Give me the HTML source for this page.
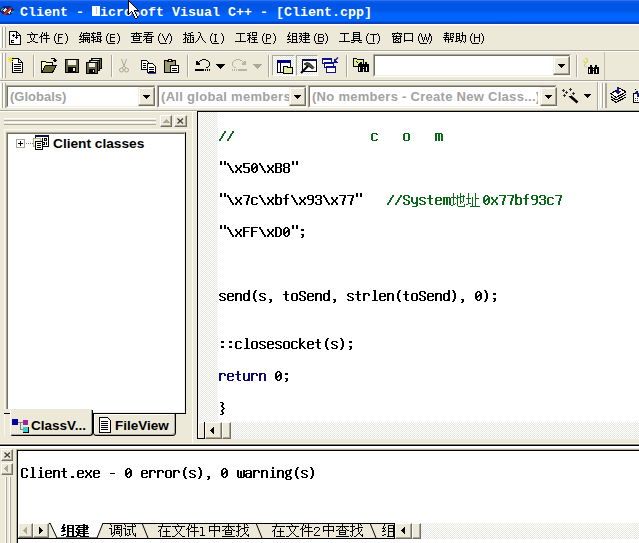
<!DOCTYPE html>
<html><head><meta charset="utf-8">
<style>
*{margin:0;padding:0;box-sizing:border-box}
html,body{width:639px;height:543px;overflow:hidden;background:#ECE9D8;font-family:"Liberation Sans",sans-serif}
.a{position:absolute}
svg{position:absolute;shape-rendering:crispEdges;overflow:visible}
#title{left:0;top:0;width:639px;height:24px;background:linear-gradient(#2A70F4 0,#2A70F4 1px,#0D5DEA 1px,#0055E4 4px,#0056E6 11px,#0062FA 13px,#0064FC 21px,#0848C8 22px,#0A3CB0 24px)}
#tline{left:0;top:24px;width:639px;height:3px;background:linear-gradient(#FFFFFF 0,#FFFFFF 1px,#F2F1EA 1px,#F2F1EA 2px,#E6E4D8 2px)}
.ttxt{left:20px;top:5px;font:bold 13.33px/16px "Liberation Mono",monospace;color:#fff;white-space:pre}
.grip{width:6px;background:linear-gradient(90deg,#fff 0,#fff 1px,#F4F3EA 1px,#F4F3EA 2px,#ACA899 2px,#ACA899 3px,#fff 3px,#fff 4px,#F4F3EA 4px,#F4F3EA 5px,#ACA899 5px,#ACA899 6px)}
.hsep{height:2px;border-top:1px solid #ACA899;border-bottom:1px solid #fff}
.vsep{width:2px;border-left:1px solid #ACA899;border-right:1px solid #fff}
.menu{font-size:12px;line-height:14px;color:#000;white-space:pre;top:30px}
.sunk{background:#fff;border-top:1px solid #ACA899;border-left:1px solid #ACA899;border-right:1px solid #fff;border-bottom:1px solid #fff}
.sunk2{position:absolute;left:0;top:0;right:0;bottom:0;border-top:1px solid #716F64;border-left:1px solid #716F64;border-right:1px solid #F1EFE2;border-bottom:1px solid #F1EFE2}
.cbtn{position:absolute;background:#ECE9D8;border-top:1px solid #F1EFE2;border-left:1px solid #F1EFE2;border-right:1px solid #716F64;border-bottom:1px solid #716F64;box-shadow:inset -1px -1px 0 #ACA899,inset 1px 1px 0 #fff}
.tri{position:absolute;width:0;height:0;border-left:3.5px solid transparent;border-right:3.5px solid transparent;border-top:4px solid #000}
.ctxt{position:absolute;font-weight:bold;font-size:13px;line-height:16px;color:#A2A2A2;white-space:pre;overflow:hidden}
.dither{background-color:#fff;background-image:conic-gradient(#E8E8E2 25%,transparent 25% 50%,#E8E8E2 50% 75%,transparent 75%);background-size:2px 2px}
.code{font:bold 13.33px/16px "Liberation Mono",monospace;white-space:pre;color:#000}
.g{color:#0A6A18}
.kw{color:#0A0A70}
.btn3d{border-top:1px solid #fff;border-left:1px solid #fff;border-right:1px solid #716F64;border-bottom:1px solid #716F64;box-shadow:inset -1px -1px 0 #ACA899;background:#ECE9D8}
</style></head><body>
<!-- ============ title bar ============ -->
<div id="title" class="a"></div>
<div id="tline" class="a"></div>
<svg style="left:0;top:5px" width="16" height="11" viewBox="0 0 16 11" shape-rendering="auto">
<ellipse cx="7" cy="5.5" rx="7" ry="4.8" fill="#14208A"/>
<path d="M2.5 6 L5 3 L7 4 L4.5 7 Z" fill="#F0F0B0"/>
<path d="M7 7 L9.5 5 L11.5 6 L9.5 9 Z" fill="#F0F0C0"/>
<path d="M3.5 9.5 L10.5 2 L12 3 L5 10.5 Z" fill="#C02818"/>
<path d="M0.5 5 L3 2.5 L4 3.5 L1.5 6.5 Z" fill="#30A060"/>
<path d="M11 8 L13 5.5 L14 6.5 L12 9 Z" fill="#30A060"/>
</svg>
<div class="a ttxt">Client - &nbsp;icrosoft Visual C++ - [Client.cpp]</div>
<div class="a" style="left:92px;top:6px;width:8px;height:10px;background:#fff"></div>
<div class="a" style="left:96px;top:7px;width:1px;height:7px;background:#A8C8F0"></div>
<svg style="left:128px;top:0" width="12" height="19"><rect x="0" y="0" width="1" height="1" fill="#000"/><rect x="0" y="1" width="1" height="1" fill="#000"/><rect x="1" y="1" width="1" height="1" fill="#000"/><rect x="0" y="2" width="1" height="1" fill="#000"/><rect x="1" y="2" width="1" height="1" fill="#fff"/><rect x="2" y="2" width="1" height="1" fill="#000"/><rect x="0" y="3" width="1" height="1" fill="#000"/><rect x="1" y="3" width="1" height="1" fill="#fff"/><rect x="2" y="3" width="1" height="1" fill="#fff"/><rect x="3" y="3" width="1" height="1" fill="#000"/><rect x="0" y="4" width="1" height="1" fill="#000"/><rect x="1" y="4" width="1" height="1" fill="#fff"/><rect x="2" y="4" width="1" height="1" fill="#fff"/><rect x="3" y="4" width="1" height="1" fill="#fff"/><rect x="4" y="4" width="1" height="1" fill="#000"/><rect x="0" y="5" width="1" height="1" fill="#000"/><rect x="1" y="5" width="1" height="1" fill="#fff"/><rect x="2" y="5" width="1" height="1" fill="#fff"/><rect x="3" y="5" width="1" height="1" fill="#fff"/><rect x="4" y="5" width="1" height="1" fill="#fff"/><rect x="5" y="5" width="1" height="1" fill="#000"/><rect x="0" y="6" width="1" height="1" fill="#000"/><rect x="1" y="6" width="1" height="1" fill="#fff"/><rect x="2" y="6" width="1" height="1" fill="#fff"/><rect x="3" y="6" width="1" height="1" fill="#fff"/><rect x="4" y="6" width="1" height="1" fill="#fff"/><rect x="5" y="6" width="1" height="1" fill="#fff"/><rect x="6" y="6" width="1" height="1" fill="#000"/><rect x="0" y="7" width="1" height="1" fill="#000"/><rect x="1" y="7" width="1" height="1" fill="#fff"/><rect x="2" y="7" width="1" height="1" fill="#fff"/><rect x="3" y="7" width="1" height="1" fill="#fff"/><rect x="4" y="7" width="1" height="1" fill="#fff"/><rect x="5" y="7" width="1" height="1" fill="#fff"/><rect x="6" y="7" width="1" height="1" fill="#fff"/><rect x="7" y="7" width="1" height="1" fill="#000"/><rect x="0" y="8" width="1" height="1" fill="#000"/><rect x="1" y="8" width="1" height="1" fill="#fff"/><rect x="2" y="8" width="1" height="1" fill="#fff"/><rect x="3" y="8" width="1" height="1" fill="#fff"/><rect x="4" y="8" width="1" height="1" fill="#fff"/><rect x="5" y="8" width="1" height="1" fill="#fff"/><rect x="6" y="8" width="1" height="1" fill="#fff"/><rect x="7" y="8" width="1" height="1" fill="#fff"/><rect x="8" y="8" width="1" height="1" fill="#000"/><rect x="0" y="9" width="1" height="1" fill="#000"/><rect x="1" y="9" width="1" height="1" fill="#fff"/><rect x="2" y="9" width="1" height="1" fill="#fff"/><rect x="3" y="9" width="1" height="1" fill="#fff"/><rect x="4" y="9" width="1" height="1" fill="#fff"/><rect x="5" y="9" width="1" height="1" fill="#fff"/><rect x="6" y="9" width="1" height="1" fill="#fff"/><rect x="7" y="9" width="1" height="1" fill="#fff"/><rect x="8" y="9" width="1" height="1" fill="#fff"/><rect x="9" y="9" width="1" height="1" fill="#000"/><rect x="0" y="10" width="1" height="1" fill="#000"/><rect x="1" y="10" width="1" height="1" fill="#fff"/><rect x="2" y="10" width="1" height="1" fill="#fff"/><rect x="3" y="10" width="1" height="1" fill="#fff"/><rect x="4" y="10" width="1" height="1" fill="#fff"/><rect x="5" y="10" width="1" height="1" fill="#fff"/><rect x="6" y="10" width="1" height="1" fill="#000"/><rect x="7" y="10" width="1" height="1" fill="#000"/><rect x="8" y="10" width="1" height="1" fill="#000"/><rect x="9" y="10" width="1" height="1" fill="#000"/><rect x="10" y="10" width="1" height="1" fill="#000"/><rect x="0" y="11" width="1" height="1" fill="#000"/><rect x="1" y="11" width="1" height="1" fill="#fff"/><rect x="2" y="11" width="1" height="1" fill="#fff"/><rect x="3" y="11" width="1" height="1" fill="#000"/><rect x="4" y="11" width="1" height="1" fill="#fff"/><rect x="5" y="11" width="1" height="1" fill="#fff"/><rect x="6" y="11" width="1" height="1" fill="#000"/><rect x="0" y="12" width="1" height="1" fill="#000"/><rect x="1" y="12" width="1" height="1" fill="#fff"/><rect x="2" y="12" width="1" height="1" fill="#000"/><rect x="4" y="12" width="1" height="1" fill="#000"/><rect x="5" y="12" width="1" height="1" fill="#fff"/><rect x="6" y="12" width="1" height="1" fill="#fff"/><rect x="7" y="12" width="1" height="1" fill="#000"/><rect x="0" y="13" width="1" height="1" fill="#000"/><rect x="1" y="13" width="1" height="1" fill="#000"/><rect x="4" y="13" width="1" height="1" fill="#000"/><rect x="5" y="13" width="1" height="1" fill="#fff"/><rect x="6" y="13" width="1" height="1" fill="#fff"/><rect x="7" y="13" width="1" height="1" fill="#000"/><rect x="0" y="14" width="1" height="1" fill="#000"/><rect x="5" y="14" width="1" height="1" fill="#000"/><rect x="6" y="14" width="1" height="1" fill="#fff"/><rect x="7" y="14" width="1" height="1" fill="#fff"/><rect x="8" y="14" width="1" height="1" fill="#000"/><rect x="5" y="15" width="1" height="1" fill="#000"/><rect x="6" y="15" width="1" height="1" fill="#fff"/><rect x="7" y="15" width="1" height="1" fill="#fff"/><rect x="8" y="15" width="1" height="1" fill="#000"/><rect x="6" y="16" width="1" height="1" fill="#000"/><rect x="7" y="16" width="1" height="1" fill="#fff"/><rect x="8" y="16" width="1" height="1" fill="#fff"/><rect x="9" y="16" width="1" height="1" fill="#000"/><rect x="6" y="17" width="1" height="1" fill="#000"/><rect x="7" y="17" width="1" height="1" fill="#fff"/><rect x="8" y="17" width="1" height="1" fill="#fff"/><rect x="9" y="17" width="1" height="1" fill="#000"/><rect x="7" y="18" width="1" height="1" fill="#000"/><rect x="8" y="18" width="1" height="1" fill="#000"/></svg>

<!-- ============ menubar y 25..50 ============ -->
<div class="a grip" style="left:0;top:27px;height:21px"></div>
<svg style="left:9px;top:31px" width="12" height="14" viewBox="0 0 12 14">
<path d="M0.5 0.5 H7.5 L11.5 4.5 V13.5 H0.5 Z" fill="#fff" stroke="#000"/>
<path d="M7.5 0.5 V4.5 H11.5" fill="none" stroke="#000"/>
<rect x="3" y="4" width="3" height="1" fill="#000"/><rect x="4" y="3" width="1" height="3" fill="#000"/>
<rect x="6" y="6" width="3" height="1" fill="#000"/><rect x="7" y="5" width="1" height="3" fill="#000"/>
<rect x="2" y="9" width="3" height="1" fill="#000"/><rect x="2" y="9" width="1" height="3" fill="#000"/><rect x="2" y="11" width="3" height="1" fill="#000"/>
</svg>
<svg style="left:27px;top:30px" width="44" height="16" fill="#000"><rect x="4" y="2" width="1" height="1"/><rect x="15" y="2" width="1" height="1"/><rect x="19" y="2" width="1" height="1"/><rect x="5" y="3" width="1" height="1"/><rect x="15" y="3" width="1" height="1"/><rect x="17" y="3" width="1" height="1"/><rect x="19" y="3" width="1" height="1"/><rect x="29" y="3" width="1" height="1"/><rect x="38" y="3" width="1" height="1"/><rect x="0" y="4" width="11" height="1"/><rect x="14" y="4" width="1" height="1"/><rect x="17" y="4" width="1" height="1"/><rect x="19" y="4" width="1" height="1"/><rect x="28" y="4" width="1" height="1"/><rect x="31" y="4" width="5" height="1"/><rect x="39" y="4" width="1" height="1"/><rect x="3" y="5" width="1" height="1"/><rect x="7" y="5" width="1" height="1"/><rect x="14" y="5" width="1" height="1"/><rect x="16" y="5" width="6" height="1"/><rect x="28" y="5" width="1" height="1"/><rect x="31" y="5" width="1" height="1"/><rect x="39" y="5" width="1" height="1"/><rect x="3" y="6" width="1" height="1"/><rect x="7" y="6" width="1" height="1"/><rect x="13" y="6" width="3" height="1"/><rect x="19" y="6" width="1" height="1"/><rect x="27" y="6" width="1" height="1"/><rect x="31" y="6" width="1" height="1"/><rect x="40" y="6" width="1" height="1"/><rect x="3" y="7" width="1" height="1"/><rect x="7" y="7" width="1" height="1"/><rect x="12" y="7" width="1" height="1"/><rect x="14" y="7" width="1" height="1"/><rect x="19" y="7" width="1" height="1"/><rect x="27" y="7" width="1" height="1"/><rect x="31" y="7" width="4" height="1"/><rect x="40" y="7" width="1" height="1"/><rect x="4" y="8" width="1" height="1"/><rect x="6" y="8" width="1" height="1"/><rect x="14" y="8" width="1" height="1"/><rect x="16" y="8" width="7" height="1"/><rect x="27" y="8" width="1" height="1"/><rect x="31" y="8" width="1" height="1"/><rect x="40" y="8" width="1" height="1"/><rect x="4" y="9" width="1" height="1"/><rect x="6" y="9" width="1" height="1"/><rect x="14" y="9" width="1" height="1"/><rect x="19" y="9" width="1" height="1"/><rect x="27" y="9" width="1" height="1"/><rect x="31" y="9" width="1" height="1"/><rect x="40" y="9" width="1" height="1"/><rect x="5" y="10" width="1" height="1"/><rect x="14" y="10" width="1" height="1"/><rect x="19" y="10" width="1" height="1"/><rect x="27" y="10" width="1" height="1"/><rect x="31" y="10" width="1" height="1"/><rect x="40" y="10" width="1" height="1"/><rect x="3" y="11" width="2" height="1"/><rect x="6" y="11" width="2" height="1"/><rect x="14" y="11" width="1" height="1"/><rect x="19" y="11" width="1" height="1"/><rect x="28" y="11" width="1" height="1"/><rect x="31" y="11" width="1" height="1"/><rect x="39" y="11" width="1" height="1"/><rect x="0" y="12" width="3" height="1"/><rect x="8" y="12" width="3" height="1"/><rect x="14" y="12" width="1" height="1"/><rect x="19" y="12" width="1" height="1"/><rect x="28" y="12" width="1" height="1"/><rect x="39" y="12" width="1" height="1"/><rect x="29" y="13" width="1" height="1"/><rect x="38" y="13" width="1" height="1"/><rect x="30" y="13" width="6" height="1"/></svg>
<svg style="left:79px;top:30px" width="44" height="16" fill="#000"><rect x="2" y="2" width="1" height="1"/><rect x="7" y="2" width="1" height="1"/><rect x="14" y="2" width="1" height="1"/><rect x="18" y="2" width="4" height="1"/><rect x="2" y="3" width="1" height="1"/><rect x="4" y="3" width="7" height="1"/><rect x="12" y="3" width="5" height="1"/><rect x="18" y="3" width="1" height="1"/><rect x="21" y="3" width="1" height="1"/><rect x="29" y="3" width="1" height="1"/><rect x="38" y="3" width="1" height="1"/><rect x="1" y="4" width="1" height="1"/><rect x="4" y="4" width="1" height="1"/><rect x="10" y="4" width="1" height="1"/><rect x="13" y="4" width="1" height="1"/><rect x="18" y="4" width="4" height="1"/><rect x="28" y="4" width="1" height="1"/><rect x="31" y="4" width="5" height="1"/><rect x="39" y="4" width="1" height="1"/><rect x="1" y="5" width="1" height="1"/><rect x="3" y="5" width="8" height="1"/><rect x="13" y="5" width="2" height="1"/><rect x="28" y="5" width="1" height="1"/><rect x="31" y="5" width="1" height="1"/><rect x="39" y="5" width="1" height="1"/><rect x="0" y="6" width="3" height="1"/><rect x="4" y="6" width="1" height="1"/><rect x="12" y="6" width="1" height="1"/><rect x="14" y="6" width="1" height="1"/><rect x="17" y="6" width="6" height="1"/><rect x="27" y="6" width="1" height="1"/><rect x="31" y="6" width="1" height="1"/><rect x="40" y="6" width="1" height="1"/><rect x="2" y="7" width="1" height="1"/><rect x="4" y="7" width="7" height="1"/><rect x="12" y="7" width="5" height="1"/><rect x="18" y="7" width="1" height="1"/><rect x="21" y="7" width="1" height="1"/><rect x="27" y="7" width="1" height="1"/><rect x="31" y="7" width="5" height="1"/><rect x="40" y="7" width="1" height="1"/><rect x="1" y="8" width="1" height="1"/><rect x="4" y="8" width="1" height="1"/><rect x="6" y="8" width="1" height="1"/><rect x="8" y="8" width="1" height="1"/><rect x="10" y="8" width="1" height="1"/><rect x="14" y="8" width="1" height="1"/><rect x="18" y="8" width="2" height="1"/><rect x="21" y="8" width="1" height="1"/><rect x="27" y="8" width="1" height="1"/><rect x="31" y="8" width="1" height="1"/><rect x="40" y="8" width="1" height="1"/><rect x="0" y="9" width="11" height="1"/><rect x="14" y="9" width="3" height="1"/><rect x="18" y="9" width="1" height="1"/><rect x="20" y="9" width="2" height="1"/><rect x="27" y="9" width="1" height="1"/><rect x="31" y="9" width="1" height="1"/><rect x="40" y="9" width="1" height="1"/><rect x="4" y="10" width="1" height="1"/><rect x="6" y="10" width="1" height="1"/><rect x="8" y="10" width="1" height="1"/><rect x="10" y="10" width="1" height="1"/><rect x="12" y="10" width="3" height="1"/><rect x="18" y="10" width="1" height="1"/><rect x="21" y="10" width="2" height="1"/><rect x="27" y="10" width="1" height="1"/><rect x="31" y="10" width="1" height="1"/><rect x="40" y="10" width="1" height="1"/><rect x="2" y="11" width="3" height="1"/><rect x="6" y="11" width="1" height="1"/><rect x="8" y="11" width="1" height="1"/><rect x="10" y="11" width="1" height="1"/><rect x="14" y="11" width="1" height="1"/><rect x="16" y="11" width="6" height="1"/><rect x="28" y="11" width="1" height="1"/><rect x="31" y="11" width="5" height="1"/><rect x="39" y="11" width="1" height="1"/><rect x="0" y="12" width="2" height="1"/><rect x="4" y="12" width="1" height="1"/><rect x="9" y="12" width="2" height="1"/><rect x="14" y="12" width="1" height="1"/><rect x="21" y="12" width="1" height="1"/><rect x="28" y="12" width="1" height="1"/><rect x="39" y="12" width="1" height="1"/><rect x="29" y="13" width="1" height="1"/><rect x="38" y="13" width="1" height="1"/><rect x="30" y="13" width="6" height="1"/></svg>
<svg style="left:131px;top:30px" width="44" height="16" fill="#000"><rect x="5" y="2" width="1" height="1"/><rect x="13" y="2" width="9" height="1"/><rect x="0" y="3" width="11" height="1"/><rect x="17" y="3" width="1" height="1"/><rect x="29" y="3" width="1" height="1"/><rect x="38" y="3" width="1" height="1"/><rect x="3" y="4" width="1" height="1"/><rect x="5" y="4" width="1" height="1"/><rect x="7" y="4" width="1" height="1"/><rect x="13" y="4" width="8" height="1"/><rect x="28" y="4" width="1" height="1"/><rect x="31" y="4" width="1" height="1"/><rect x="37" y="4" width="1" height="1"/><rect x="39" y="4" width="1" height="1"/><rect x="2" y="5" width="1" height="1"/><rect x="5" y="5" width="1" height="1"/><rect x="8" y="5" width="1" height="1"/><rect x="16" y="5" width="1" height="1"/><rect x="28" y="5" width="1" height="1"/><rect x="31" y="5" width="1" height="1"/><rect x="37" y="5" width="1" height="1"/><rect x="39" y="5" width="1" height="1"/><rect x="0" y="6" width="11" height="1"/><rect x="12" y="6" width="11" height="1"/><rect x="27" y="6" width="1" height="1"/><rect x="32" y="6" width="1" height="1"/><rect x="36" y="6" width="1" height="1"/><rect x="40" y="6" width="1" height="1"/><rect x="2" y="7" width="1" height="1"/><rect x="8" y="7" width="1" height="1"/><rect x="15" y="7" width="1" height="1"/><rect x="20" y="7" width="1" height="1"/><rect x="27" y="7" width="1" height="1"/><rect x="32" y="7" width="1" height="1"/><rect x="36" y="7" width="1" height="1"/><rect x="40" y="7" width="1" height="1"/><rect x="2" y="8" width="7" height="1"/><rect x="14" y="8" width="7" height="1"/><rect x="27" y="8" width="1" height="1"/><rect x="33" y="8" width="1" height="1"/><rect x="35" y="8" width="1" height="1"/><rect x="40" y="8" width="1" height="1"/><rect x="2" y="9" width="1" height="1"/><rect x="8" y="9" width="1" height="1"/><rect x="13" y="9" width="1" height="1"/><rect x="15" y="9" width="1" height="1"/><rect x="20" y="9" width="1" height="1"/><rect x="27" y="9" width="1" height="1"/><rect x="33" y="9" width="1" height="1"/><rect x="35" y="9" width="1" height="1"/><rect x="40" y="9" width="1" height="1"/><rect x="2" y="10" width="7" height="1"/><rect x="12" y="10" width="1" height="1"/><rect x="15" y="10" width="6" height="1"/><rect x="27" y="10" width="1" height="1"/><rect x="34" y="10" width="1" height="1"/><rect x="40" y="10" width="1" height="1"/><rect x="15" y="11" width="1" height="1"/><rect x="20" y="11" width="1" height="1"/><rect x="28" y="11" width="1" height="1"/><rect x="34" y="11" width="1" height="1"/><rect x="39" y="11" width="1" height="1"/><rect x="0" y="12" width="11" height="1"/><rect x="15" y="12" width="6" height="1"/><rect x="28" y="12" width="1" height="1"/><rect x="39" y="12" width="1" height="1"/><rect x="29" y="13" width="1" height="1"/><rect x="38" y="13" width="1" height="1"/><rect x="30" y="13" width="6" height="1"/></svg>
<svg style="left:183px;top:30px" width="44" height="16" fill="#000"><rect x="2" y="2" width="1" height="1"/><rect x="8" y="2" width="2" height="1"/><rect x="15" y="2" width="2" height="1"/><rect x="2" y="3" width="1" height="1"/><rect x="5" y="3" width="3" height="1"/><rect x="17" y="3" width="1" height="1"/><rect x="29" y="3" width="1" height="1"/><rect x="38" y="3" width="1" height="1"/><rect x="0" y="4" width="4" height="1"/><rect x="7" y="4" width="1" height="1"/><rect x="17" y="4" width="1" height="1"/><rect x="28" y="4" width="1" height="1"/><rect x="31" y="4" width="3" height="1"/><rect x="39" y="4" width="1" height="1"/><rect x="2" y="5" width="1" height="1"/><rect x="4" y="5" width="7" height="1"/><rect x="17" y="5" width="1" height="1"/><rect x="28" y="5" width="1" height="1"/><rect x="32" y="5" width="1" height="1"/><rect x="39" y="5" width="1" height="1"/><rect x="2" y="6" width="1" height="1"/><rect x="7" y="6" width="1" height="1"/><rect x="16" y="6" width="1" height="1"/><rect x="18" y="6" width="1" height="1"/><rect x="27" y="6" width="1" height="1"/><rect x="32" y="6" width="1" height="1"/><rect x="40" y="6" width="1" height="1"/><rect x="2" y="7" width="2" height="1"/><rect x="5" y="7" width="1" height="1"/><rect x="7" y="7" width="1" height="1"/><rect x="9" y="7" width="2" height="1"/><rect x="16" y="7" width="1" height="1"/><rect x="18" y="7" width="1" height="1"/><rect x="27" y="7" width="1" height="1"/><rect x="32" y="7" width="1" height="1"/><rect x="40" y="7" width="1" height="1"/><rect x="1" y="8" width="2" height="1"/><rect x="4" y="8" width="1" height="1"/><rect x="7" y="8" width="1" height="1"/><rect x="10" y="8" width="1" height="1"/><rect x="15" y="8" width="1" height="1"/><rect x="19" y="8" width="1" height="1"/><rect x="27" y="8" width="1" height="1"/><rect x="32" y="8" width="1" height="1"/><rect x="40" y="8" width="1" height="1"/><rect x="0" y="9" width="1" height="1"/><rect x="2" y="9" width="1" height="1"/><rect x="4" y="9" width="2" height="1"/><rect x="7" y="9" width="1" height="1"/><rect x="9" y="9" width="2" height="1"/><rect x="15" y="9" width="1" height="1"/><rect x="19" y="9" width="1" height="1"/><rect x="27" y="9" width="1" height="1"/><rect x="32" y="9" width="1" height="1"/><rect x="40" y="9" width="1" height="1"/><rect x="2" y="10" width="1" height="1"/><rect x="4" y="10" width="1" height="1"/><rect x="7" y="10" width="1" height="1"/><rect x="10" y="10" width="1" height="1"/><rect x="14" y="10" width="1" height="1"/><rect x="20" y="10" width="1" height="1"/><rect x="27" y="10" width="1" height="1"/><rect x="32" y="10" width="1" height="1"/><rect x="40" y="10" width="1" height="1"/><rect x="2" y="11" width="1" height="1"/><rect x="4" y="11" width="1" height="1"/><rect x="7" y="11" width="1" height="1"/><rect x="10" y="11" width="1" height="1"/><rect x="13" y="11" width="1" height="1"/><rect x="21" y="11" width="1" height="1"/><rect x="28" y="11" width="1" height="1"/><rect x="31" y="11" width="3" height="1"/><rect x="39" y="11" width="1" height="1"/><rect x="0" y="12" width="3" height="1"/><rect x="4" y="12" width="7" height="1"/><rect x="12" y="12" width="1" height="1"/><rect x="22" y="12" width="1" height="1"/><rect x="28" y="12" width="1" height="1"/><rect x="39" y="12" width="1" height="1"/><rect x="29" y="13" width="1" height="1"/><rect x="38" y="13" width="1" height="1"/><rect x="30" y="13" width="6" height="1"/></svg>
<svg style="left:235px;top:30px" width="44" height="16" fill="#000"><rect x="15" y="2" width="1" height="1"/><rect x="17" y="2" width="5" height="1"/><rect x="1" y="3" width="9" height="1"/><rect x="12" y="3" width="3" height="1"/><rect x="17" y="3" width="1" height="1"/><rect x="21" y="3" width="1" height="1"/><rect x="29" y="3" width="1" height="1"/><rect x="38" y="3" width="1" height="1"/><rect x="5" y="4" width="1" height="1"/><rect x="14" y="4" width="1" height="1"/><rect x="17" y="4" width="1" height="1"/><rect x="21" y="4" width="1" height="1"/><rect x="28" y="4" width="1" height="1"/><rect x="31" y="4" width="4" height="1"/><rect x="39" y="4" width="1" height="1"/><rect x="5" y="5" width="1" height="1"/><rect x="12" y="5" width="4" height="1"/><rect x="17" y="5" width="5" height="1"/><rect x="28" y="5" width="1" height="1"/><rect x="31" y="5" width="1" height="1"/><rect x="35" y="5" width="1" height="1"/><rect x="39" y="5" width="1" height="1"/><rect x="5" y="6" width="1" height="1"/><rect x="14" y="6" width="1" height="1"/><rect x="27" y="6" width="1" height="1"/><rect x="31" y="6" width="1" height="1"/><rect x="35" y="6" width="1" height="1"/><rect x="40" y="6" width="1" height="1"/><rect x="5" y="7" width="1" height="1"/><rect x="14" y="7" width="2" height="1"/><rect x="17" y="7" width="5" height="1"/><rect x="27" y="7" width="1" height="1"/><rect x="31" y="7" width="1" height="1"/><rect x="35" y="7" width="1" height="1"/><rect x="40" y="7" width="1" height="1"/><rect x="5" y="8" width="1" height="1"/><rect x="13" y="8" width="2" height="1"/><rect x="16" y="8" width="1" height="1"/><rect x="19" y="8" width="1" height="1"/><rect x="27" y="8" width="1" height="1"/><rect x="31" y="8" width="4" height="1"/><rect x="40" y="8" width="1" height="1"/><rect x="5" y="9" width="1" height="1"/><rect x="13" y="9" width="2" height="1"/><rect x="17" y="9" width="5" height="1"/><rect x="27" y="9" width="1" height="1"/><rect x="31" y="9" width="1" height="1"/><rect x="40" y="9" width="1" height="1"/><rect x="5" y="10" width="1" height="1"/><rect x="12" y="10" width="1" height="1"/><rect x="14" y="10" width="1" height="1"/><rect x="19" y="10" width="1" height="1"/><rect x="27" y="10" width="1" height="1"/><rect x="31" y="10" width="1" height="1"/><rect x="40" y="10" width="1" height="1"/><rect x="0" y="11" width="11" height="1"/><rect x="14" y="11" width="1" height="1"/><rect x="19" y="11" width="1" height="1"/><rect x="28" y="11" width="1" height="1"/><rect x="31" y="11" width="1" height="1"/><rect x="39" y="11" width="1" height="1"/><rect x="14" y="12" width="1" height="1"/><rect x="16" y="12" width="7" height="1"/><rect x="28" y="12" width="1" height="1"/><rect x="39" y="12" width="1" height="1"/><rect x="29" y="13" width="1" height="1"/><rect x="38" y="13" width="1" height="1"/><rect x="30" y="13" width="6" height="1"/></svg>
<svg style="left:287px;top:30px" width="44" height="16" fill="#000"><rect x="2" y="2" width="1" height="1"/><rect x="18" y="2" width="1" height="1"/><rect x="2" y="3" width="1" height="1"/><rect x="5" y="3" width="5" height="1"/><rect x="12" y="3" width="3" height="1"/><rect x="16" y="3" width="6" height="1"/><rect x="29" y="3" width="1" height="1"/><rect x="38" y="3" width="1" height="1"/><rect x="1" y="4" width="1" height="1"/><rect x="5" y="4" width="1" height="1"/><rect x="9" y="4" width="1" height="1"/><rect x="14" y="4" width="1" height="1"/><rect x="18" y="4" width="1" height="1"/><rect x="21" y="4" width="1" height="1"/><rect x="28" y="4" width="1" height="1"/><rect x="31" y="4" width="5" height="1"/><rect x="39" y="4" width="1" height="1"/><rect x="1" y="5" width="1" height="1"/><rect x="3" y="5" width="1" height="1"/><rect x="5" y="5" width="1" height="1"/><rect x="9" y="5" width="1" height="1"/><rect x="13" y="5" width="1" height="1"/><rect x="15" y="5" width="8" height="1"/><rect x="28" y="5" width="1" height="1"/><rect x="31" y="5" width="1" height="1"/><rect x="36" y="5" width="1" height="1"/><rect x="39" y="5" width="1" height="1"/><rect x="0" y="6" width="3" height="1"/><rect x="5" y="6" width="5" height="1"/><rect x="12" y="6" width="3" height="1"/><rect x="18" y="6" width="1" height="1"/><rect x="21" y="6" width="1" height="1"/><rect x="27" y="6" width="1" height="1"/><rect x="31" y="6" width="1" height="1"/><rect x="36" y="6" width="1" height="1"/><rect x="40" y="6" width="1" height="1"/><rect x="2" y="7" width="1" height="1"/><rect x="5" y="7" width="1" height="1"/><rect x="9" y="7" width="1" height="1"/><rect x="14" y="7" width="1" height="1"/><rect x="16" y="7" width="6" height="1"/><rect x="27" y="7" width="1" height="1"/><rect x="31" y="7" width="5" height="1"/><rect x="40" y="7" width="1" height="1"/><rect x="1" y="8" width="1" height="1"/><rect x="5" y="8" width="1" height="1"/><rect x="9" y="8" width="1" height="1"/><rect x="12" y="8" width="1" height="1"/><rect x="14" y="8" width="1" height="1"/><rect x="18" y="8" width="1" height="1"/><rect x="27" y="8" width="1" height="1"/><rect x="31" y="8" width="1" height="1"/><rect x="36" y="8" width="1" height="1"/><rect x="40" y="8" width="1" height="1"/><rect x="0" y="9" width="4" height="1"/><rect x="5" y="9" width="5" height="1"/><rect x="13" y="9" width="2" height="1"/><rect x="16" y="9" width="7" height="1"/><rect x="27" y="9" width="1" height="1"/><rect x="31" y="9" width="1" height="1"/><rect x="36" y="9" width="1" height="1"/><rect x="40" y="9" width="1" height="1"/><rect x="5" y="10" width="1" height="1"/><rect x="9" y="10" width="1" height="1"/><rect x="14" y="10" width="1" height="1"/><rect x="18" y="10" width="1" height="1"/><rect x="27" y="10" width="1" height="1"/><rect x="31" y="10" width="1" height="1"/><rect x="36" y="10" width="1" height="1"/><rect x="40" y="10" width="1" height="1"/><rect x="2" y="11" width="2" height="1"/><rect x="5" y="11" width="1" height="1"/><rect x="9" y="11" width="1" height="1"/><rect x="13" y="11" width="1" height="1"/><rect x="15" y="11" width="1" height="1"/><rect x="18" y="11" width="1" height="1"/><rect x="28" y="11" width="1" height="1"/><rect x="31" y="11" width="5" height="1"/><rect x="39" y="11" width="1" height="1"/><rect x="0" y="12" width="2" height="1"/><rect x="4" y="12" width="7" height="1"/><rect x="12" y="12" width="1" height="1"/><rect x="16" y="12" width="7" height="1"/><rect x="28" y="12" width="1" height="1"/><rect x="39" y="12" width="1" height="1"/><rect x="29" y="13" width="1" height="1"/><rect x="38" y="13" width="1" height="1"/><rect x="30" y="13" width="6" height="1"/></svg>
<svg style="left:339px;top:30px" width="44" height="16" fill="#000"><rect x="14" y="2" width="7" height="1"/><rect x="1" y="3" width="9" height="1"/><rect x="14" y="3" width="1" height="1"/><rect x="20" y="3" width="1" height="1"/><rect x="29" y="3" width="1" height="1"/><rect x="38" y="3" width="1" height="1"/><rect x="5" y="4" width="1" height="1"/><rect x="14" y="4" width="7" height="1"/><rect x="28" y="4" width="1" height="1"/><rect x="31" y="4" width="7" height="1"/><rect x="39" y="4" width="1" height="1"/><rect x="5" y="5" width="1" height="1"/><rect x="14" y="5" width="1" height="1"/><rect x="20" y="5" width="1" height="1"/><rect x="28" y="5" width="1" height="1"/><rect x="34" y="5" width="1" height="1"/><rect x="39" y="5" width="1" height="1"/><rect x="5" y="6" width="1" height="1"/><rect x="14" y="6" width="7" height="1"/><rect x="27" y="6" width="1" height="1"/><rect x="34" y="6" width="1" height="1"/><rect x="40" y="6" width="1" height="1"/><rect x="5" y="7" width="1" height="1"/><rect x="14" y="7" width="1" height="1"/><rect x="20" y="7" width="1" height="1"/><rect x="27" y="7" width="1" height="1"/><rect x="34" y="7" width="1" height="1"/><rect x="40" y="7" width="1" height="1"/><rect x="5" y="8" width="1" height="1"/><rect x="14" y="8" width="7" height="1"/><rect x="27" y="8" width="1" height="1"/><rect x="34" y="8" width="1" height="1"/><rect x="40" y="8" width="1" height="1"/><rect x="5" y="9" width="1" height="1"/><rect x="14" y="9" width="1" height="1"/><rect x="20" y="9" width="1" height="1"/><rect x="27" y="9" width="1" height="1"/><rect x="34" y="9" width="1" height="1"/><rect x="40" y="9" width="1" height="1"/><rect x="5" y="10" width="1" height="1"/><rect x="12" y="10" width="11" height="1"/><rect x="27" y="10" width="1" height="1"/><rect x="34" y="10" width="1" height="1"/><rect x="40" y="10" width="1" height="1"/><rect x="0" y="11" width="11" height="1"/><rect x="15" y="11" width="1" height="1"/><rect x="19" y="11" width="1" height="1"/><rect x="28" y="11" width="1" height="1"/><rect x="34" y="11" width="1" height="1"/><rect x="39" y="11" width="1" height="1"/><rect x="12" y="12" width="3" height="1"/><rect x="20" y="12" width="3" height="1"/><rect x="28" y="12" width="1" height="1"/><rect x="39" y="12" width="1" height="1"/><rect x="29" y="13" width="1" height="1"/><rect x="38" y="13" width="1" height="1"/><rect x="30" y="13" width="6" height="1"/></svg>
<svg style="left:391px;top:30px" width="44" height="16" fill="#000"><rect x="6" y="2" width="1" height="1"/><rect x="1" y="3" width="10" height="1"/><rect x="13" y="3" width="9" height="1"/><rect x="29" y="3" width="1" height="1"/><rect x="38" y="3" width="1" height="1"/><rect x="1" y="4" width="1" height="1"/><rect x="3" y="4" width="1" height="1"/><rect x="8" y="4" width="1" height="1"/><rect x="10" y="4" width="1" height="1"/><rect x="13" y="4" width="1" height="1"/><rect x="21" y="4" width="1" height="1"/><rect x="28" y="4" width="1" height="1"/><rect x="30" y="4" width="1" height="1"/><rect x="34" y="4" width="1" height="1"/><rect x="38" y="4" width="2" height="1"/><rect x="2" y="5" width="1" height="1"/><rect x="5" y="5" width="1" height="1"/><rect x="9" y="5" width="1" height="1"/><rect x="13" y="5" width="1" height="1"/><rect x="21" y="5" width="1" height="1"/><rect x="28" y="5" width="1" height="1"/><rect x="30" y="5" width="1" height="1"/><rect x="34" y="5" width="1" height="1"/><rect x="38" y="5" width="2" height="1"/><rect x="1" y="6" width="10" height="1"/><rect x="13" y="6" width="1" height="1"/><rect x="21" y="6" width="1" height="1"/><rect x="27" y="6" width="1" height="1"/><rect x="30" y="6" width="1" height="1"/><rect x="34" y="6" width="1" height="1"/><rect x="38" y="6" width="1" height="1"/><rect x="40" y="6" width="1" height="1"/><rect x="2" y="7" width="1" height="1"/><rect x="5" y="7" width="1" height="1"/><rect x="9" y="7" width="1" height="1"/><rect x="13" y="7" width="1" height="1"/><rect x="21" y="7" width="1" height="1"/><rect x="27" y="7" width="1" height="1"/><rect x="31" y="7" width="1" height="1"/><rect x="33" y="7" width="1" height="1"/><rect x="35" y="7" width="1" height="1"/><rect x="37" y="7" width="1" height="1"/><rect x="40" y="7" width="1" height="1"/><rect x="2" y="8" width="1" height="1"/><rect x="4" y="8" width="6" height="1"/><rect x="13" y="8" width="1" height="1"/><rect x="21" y="8" width="1" height="1"/><rect x="27" y="8" width="1" height="1"/><rect x="31" y="8" width="1" height="1"/><rect x="33" y="8" width="1" height="1"/><rect x="35" y="8" width="1" height="1"/><rect x="37" y="8" width="1" height="1"/><rect x="40" y="8" width="1" height="1"/><rect x="2" y="9" width="3" height="1"/><rect x="7" y="9" width="1" height="1"/><rect x="9" y="9" width="1" height="1"/><rect x="13" y="9" width="1" height="1"/><rect x="21" y="9" width="1" height="1"/><rect x="27" y="9" width="1" height="1"/><rect x="31" y="9" width="1" height="1"/><rect x="33" y="9" width="1" height="1"/><rect x="35" y="9" width="1" height="1"/><rect x="37" y="9" width="1" height="1"/><rect x="40" y="9" width="1" height="1"/><rect x="2" y="10" width="1" height="1"/><rect x="5" y="10" width="2" height="1"/><rect x="9" y="10" width="1" height="1"/><rect x="13" y="10" width="9" height="1"/><rect x="27" y="10" width="1" height="1"/><rect x="32" y="10" width="1" height="1"/><rect x="36" y="10" width="1" height="1"/><rect x="40" y="10" width="1" height="1"/><rect x="2" y="11" width="1" height="1"/><rect x="4" y="11" width="1" height="1"/><rect x="7" y="11" width="1" height="1"/><rect x="9" y="11" width="1" height="1"/><rect x="13" y="11" width="1" height="1"/><rect x="21" y="11" width="1" height="1"/><rect x="28" y="11" width="1" height="1"/><rect x="32" y="11" width="1" height="1"/><rect x="36" y="11" width="1" height="1"/><rect x="39" y="11" width="1" height="1"/><rect x="2" y="12" width="8" height="1"/><rect x="28" y="12" width="1" height="1"/><rect x="39" y="12" width="1" height="1"/><rect x="29" y="13" width="1" height="1"/><rect x="38" y="13" width="1" height="1"/><rect x="30" y="13" width="6" height="1"/></svg>
<svg style="left:443px;top:30px" width="44" height="16" fill="#000"><rect x="3" y="2" width="1" height="1"/><rect x="19" y="2" width="1" height="1"/><rect x="1" y="3" width="5" height="1"/><rect x="7" y="3" width="4" height="1"/><rect x="13" y="3" width="4" height="1"/><rect x="19" y="3" width="1" height="1"/><rect x="29" y="3" width="1" height="1"/><rect x="38" y="3" width="1" height="1"/><rect x="3" y="4" width="1" height="1"/><rect x="7" y="4" width="1" height="1"/><rect x="10" y="4" width="1" height="1"/><rect x="13" y="4" width="1" height="1"/><rect x="16" y="4" width="1" height="1"/><rect x="19" y="4" width="1" height="1"/><rect x="28" y="4" width="1" height="1"/><rect x="31" y="4" width="1" height="1"/><rect x="36" y="4" width="1" height="1"/><rect x="39" y="4" width="1" height="1"/><rect x="1" y="5" width="5" height="1"/><rect x="7" y="5" width="1" height="1"/><rect x="9" y="5" width="1" height="1"/><rect x="13" y="5" width="1" height="1"/><rect x="16" y="5" width="1" height="1"/><rect x="18" y="5" width="5" height="1"/><rect x="28" y="5" width="1" height="1"/><rect x="31" y="5" width="1" height="1"/><rect x="36" y="5" width="1" height="1"/><rect x="39" y="5" width="1" height="1"/><rect x="3" y="6" width="1" height="1"/><rect x="7" y="6" width="1" height="1"/><rect x="10" y="6" width="1" height="1"/><rect x="13" y="6" width="4" height="1"/><rect x="19" y="6" width="1" height="1"/><rect x="22" y="6" width="1" height="1"/><rect x="27" y="6" width="1" height="1"/><rect x="31" y="6" width="1" height="1"/><rect x="36" y="6" width="1" height="1"/><rect x="40" y="6" width="1" height="1"/><rect x="0" y="7" width="6" height="1"/><rect x="7" y="7" width="4" height="1"/><rect x="13" y="7" width="1" height="1"/><rect x="16" y="7" width="1" height="1"/><rect x="19" y="7" width="1" height="1"/><rect x="22" y="7" width="1" height="1"/><rect x="27" y="7" width="1" height="1"/><rect x="31" y="7" width="6" height="1"/><rect x="40" y="7" width="1" height="1"/><rect x="2" y="8" width="1" height="1"/><rect x="5" y="8" width="1" height="1"/><rect x="7" y="8" width="1" height="1"/><rect x="13" y="8" width="4" height="1"/><rect x="19" y="8" width="1" height="1"/><rect x="22" y="8" width="1" height="1"/><rect x="27" y="8" width="1" height="1"/><rect x="31" y="8" width="1" height="1"/><rect x="36" y="8" width="1" height="1"/><rect x="40" y="8" width="1" height="1"/><rect x="1" y="9" width="9" height="1"/><rect x="13" y="9" width="1" height="1"/><rect x="16" y="9" width="1" height="1"/><rect x="19" y="9" width="1" height="1"/><rect x="22" y="9" width="1" height="1"/><rect x="27" y="9" width="1" height="1"/><rect x="31" y="9" width="1" height="1"/><rect x="36" y="9" width="1" height="1"/><rect x="40" y="9" width="1" height="1"/><rect x="2" y="10" width="1" height="1"/><rect x="5" y="10" width="1" height="1"/><rect x="9" y="10" width="1" height="1"/><rect x="13" y="10" width="1" height="1"/><rect x="15" y="10" width="4" height="1"/><rect x="22" y="10" width="1" height="1"/><rect x="27" y="10" width="1" height="1"/><rect x="31" y="10" width="1" height="1"/><rect x="36" y="10" width="1" height="1"/><rect x="40" y="10" width="1" height="1"/><rect x="2" y="11" width="1" height="1"/><rect x="5" y="11" width="1" height="1"/><rect x="8" y="11" width="2" height="1"/><rect x="12" y="11" width="3" height="1"/><rect x="18" y="11" width="1" height="1"/><rect x="20" y="11" width="1" height="1"/><rect x="22" y="11" width="1" height="1"/><rect x="28" y="11" width="1" height="1"/><rect x="31" y="11" width="1" height="1"/><rect x="36" y="11" width="1" height="1"/><rect x="39" y="11" width="1" height="1"/><rect x="5" y="12" width="1" height="1"/><rect x="17" y="12" width="1" height="1"/><rect x="21" y="12" width="1" height="1"/><rect x="28" y="12" width="1" height="1"/><rect x="39" y="12" width="1" height="1"/><rect x="29" y="13" width="1" height="1"/><rect x="38" y="13" width="1" height="1"/><rect x="30" y="13" width="6" height="1"/></svg>
<div class="a hsep" style="left:0;top:50px;width:639px"></div>

<!-- ============ toolbar 1 y 52..79 ============ -->
<div class="a grip" style="left:0;top:53px;height:25px"></div>
<div class="a" style="left:604px;top:52px;width:1px;height:28px;background:#C4C1B2"></div>
<div class="a vsep" style="left:33px;top:55px;height:22px"></div>
<div class="a vsep" style="left:111px;top:55px;height:22px"></div>
<div class="a vsep" style="left:187px;top:55px;height:22px"></div>
<div class="a vsep" style="left:268px;top:55px;height:22px"></div>
<div class="a vsep" style="left:346px;top:55px;height:22px"></div>
<div class="a vsep" style="left:576px;top:55px;height:22px"></div>

<!-- new file -->
<svg style="left:8px;top:57px" width="16" height="16" viewBox="0 0 16 16">
<path d="M4.5 1.5 H10.5 L14.5 5.5 V15.5 H4.5 Z" fill="#fff" stroke="#000"/>
<path d="M10.5 1.5 V5.5 H14.5" fill="none" stroke="#000"/>
<rect x="6" y="7" width="7" height="1" fill="#000"/><rect x="6" y="9" width="7" height="1" fill="#000"/><rect x="6" y="11" width="7" height="1" fill="#000"/><rect x="6" y="13" width="7" height="1" fill="#000"/>
<path d="M0 0 L5 5 M5 0 L0 5 M2.5 -0.5 V5.5 M-0.5 2.5 H5.5" stroke="#E8E040" stroke-width="1"/>
</svg>
<!-- open -->
<svg style="left:41px;top:57px" width="16" height="16" viewBox="0 0 16 16">
<path d="M0.5 4.5 H4.5 L5.5 5.5 H11.5 V8.5 H4.5 L0.5 15.5 Z" fill="#FFFFC0" stroke="#000"/>
<path d="M0.5 15.5 L4.5 8.5 H15.5 L11.5 15.5 Z" fill="#66663A" stroke="#000"/>
<path d="M9.5 2.5 Q12 0 14 2.5 V4" fill="none" stroke="#000"/>
<path d="M12 3 H16 L14 5.5 Z" fill="#000"/>
</svg>
<!-- save -->
<svg style="left:65px;top:59px" width="14" height="14" viewBox="0 0 14 14">
<rect x="0.5" y="0.5" width="13" height="13" fill="#66663A" stroke="#000"/>
<rect x="3" y="1" width="8" height="5" fill="#F0F0E0"/>
<rect x="3" y="8" width="8" height="5" fill="#000"/>
<rect x="8" y="9" width="2" height="3" fill="#F0F0E0"/>
</svg>
<!-- save all -->
<svg style="left:86px;top:58px" width="16" height="16" viewBox="0 0 16 16">
<rect x="5.5" y="0.5" width="10" height="10" fill="#66663A" stroke="#000"/>
<rect x="7" y="1" width="6" height="2" fill="#F0F0E0"/>
<rect x="3.5" y="2.5" width="10" height="10" fill="#66663A" stroke="#000"/>
<rect x="5" y="3" width="6" height="2" fill="#F0F0E0"/>
<rect x="0.5" y="4.5" width="11" height="11" fill="#66663A" stroke="#000"/>
<rect x="3" y="5" width="6" height="4" fill="#F0F0F0"/>
<rect x="3" y="11" width="6" height="4" fill="#000"/>
<rect x="7" y="12" width="1" height="2" fill="#F0F0E0"/>
</svg>
<!-- cut (disabled) -->
<svg style="left:119px;top:59px" width="10" height="14" viewBox="0 0 10 14">
<path d="M2.5 0 L5 7 M7.5 0 L5 7 M5 7 L3 9 M5 7 L7 9" stroke="#ACA899" fill="none" shape-rendering="auto"/>
<circle cx="2.5" cy="11" r="2" fill="none" stroke="#ACA899" shape-rendering="auto"/>
<circle cx="7.5" cy="11" r="2" fill="none" stroke="#ACA899" shape-rendering="auto"/>
</svg>
<!-- copy -->
<svg style="left:141px;top:60px" width="16" height="14" viewBox="0 0 16 14">
<path d="M0.5 0.5 H5.5 L7.5 2.5 V9.5 H0.5 Z" fill="#fff" stroke="#000"/>
<rect x="2" y="3" width="3" height="1" fill="#000"/><rect x="2" y="5" width="3" height="1" fill="#000"/><rect x="2" y="7" width="3" height="1" fill="#000"/>
<path d="M6.5 3.5 H11.5 L14.5 6.5 V12.5 H6.5 Z" fill="#fff" stroke="#000"/>
<rect x="8" y="7" width="5" height="1" fill="#000"/><rect x="8" y="9" width="5" height="1" fill="#000"/><rect x="8" y="11" width="5" height="1" fill="#000"/>
<rect x="7" y="13" width="8" height="1" fill="#4040A0"/>
</svg>
<!-- paste -->
<svg style="left:164px;top:59px" width="16" height="14" viewBox="0 0 16 14">
<rect x="0.5" y="1.5" width="11" height="12" fill="#A09870" stroke="#000"/>
<path d="M3.5 2.5 L5 0.5 H7 L8.5 2.5 Z" fill="#fff" stroke="#000"/>
<rect x="6.5" y="6.5" width="8" height="7" fill="#fff" stroke="#000"/>
<rect x="8" y="9" width="5" height="1" fill="#000"/><rect x="8" y="11" width="5" height="1" fill="#000"/>
</svg>
<!-- undo -->
<svg style="left:194px;top:58px" width="18" height="14" fill="#000"><rect x="8" y="1" width="4" height="1"/><rect x="6" y="2" width="2" height="1"/><rect x="5" y="3" width="1" height="1"/><rect x="12" y="2" width="2" height="1"/><rect x="14" y="3" width="1" height="1"/><rect x="15" y="4" width="1" height="4"/><rect x="14" y="8" width="1" height="1"/><rect x="12" y="9" width="2" height="1"/><rect x="2" y="3" width="2" height="1"/><rect x="2" y="4" width="3" height="1"/><rect x="2" y="5" width="4" height="1"/><rect x="2" y="6" width="4" height="1"/><rect x="1" y="11" width="9" height="2"/><rect x="11" y="11" width="1" height="2"/><rect x="13" y="11" width="1" height="2"/><rect x="15" y="11" width="1" height="2"/></svg>
<svg style="left:216px;top:64px" width="9" height="5" fill="#000"><rect x="0" y="0" width="9" height="1"/><rect x="1" y="1" width="7" height="1"/><rect x="2" y="2" width="5" height="1"/><rect x="3" y="3" width="3" height="1"/><rect x="4" y="4" width="1" height="1"/></svg>
<!-- redo disabled -->
<svg style="left:230px;top:58px" width="18" height="14" fill="#B8B4A4"><rect x="6" y="1" width="4" height="1"/><rect x="10" y="2" width="2" height="1"/><rect x="12" y="3" width="1" height="1"/><rect x="4" y="2" width="2" height="1"/><rect x="3" y="3" width="1" height="1"/><rect x="2" y="4" width="1" height="4"/><rect x="3" y="8" width="1" height="1"/><rect x="4" y="9" width="2" height="1"/><rect x="14" y="3" width="2" height="1"/><rect x="13" y="4" width="3" height="1"/><rect x="12" y="5" width="4" height="1"/><rect x="12" y="6" width="4" height="1"/><rect x="8" y="11" width="9" height="2"/><rect x="6" y="11" width="1" height="2"/><rect x="4" y="11" width="1" height="2"/><rect x="2" y="11" width="1" height="2"/></svg>
<svg style="left:253px;top:64px" width="9" height="5" fill="#ACA899"><rect x="0" y="0" width="9" height="1"/><rect x="1" y="1" width="7" height="1"/><rect x="2" y="2" width="5" height="1"/><rect x="3" y="3" width="3" height="1"/><rect x="4" y="4" width="1" height="1"/></svg>

<!-- pressed buttons -->
<div class="a dither" style="left:272px;top:55px;width:23px;height:21px;border-top:1px solid #ACA899;border-left:1px solid #ACA899;border-right:1px solid #fff;border-bottom:1px solid #fff"></div>
<div class="a dither" style="left:296px;top:55px;width:22px;height:21px;border-top:1px solid #ACA899;border-left:1px solid #ACA899;border-right:1px solid #fff;border-bottom:1px solid #fff"></div>
<!-- workspace icon -->
<svg style="left:277px;top:60px" width="16" height="14" viewBox="0 0 16 14">
<rect x="0.5" y="0.5" width="13" height="12" fill="#fff" stroke="#000"/>
<rect x="0" y="0" width="14" height="3" fill="#000080"/>
<rect x="3" y="3" width="1" height="10" fill="#000"/>
<path d="M6.5 6.5 H10 L11 7.5 H15.5 V13.5 H6.5 Z" fill="#E8E8A0" stroke="#000"/>
</svg>
<!-- output icon (hammer) -->
<svg style="left:300px;top:58px" width="17" height="16" viewBox="0 0 17 16">
<rect x="2.5" y="1.5" width="14" height="12" fill="#fff" stroke="#000"/>
<rect x="2" y="1" width="15" height="2" fill="#10104A"/>
<path d="M4 6 L7 4.5 L10 5.5 L14 9.5 L12.5 11 L9 8.5 Z" fill="#4A5A40" stroke="#000" stroke-width="0.8" shape-rendering="auto"/>
<path d="M1 15 L8 8" stroke="#000" stroke-width="2.2" shape-rendering="auto"/>
</svg>
<!-- windows icon -->
<svg style="left:322px;top:57px" width="18" height="16" viewBox="0 0 18 16">
<rect x="0.5" y="1.5" width="9" height="5" fill="#fff" stroke="#10108A"/><rect x="0" y="1" width="10" height="2" fill="#10108A"/>
<rect x="2.5" y="5.5" width="9" height="5" fill="#fff" stroke="#10108A"/><rect x="2" y="5" width="10" height="2" fill="#10108A"/>
<rect x="4.5" y="9.5" width="9" height="6" fill="#fff" stroke="#10108A"/><rect x="4" y="9" width="10" height="2" fill="#10108A"/>
<path d="M16 0.5 L13 3.5" stroke="#10108A" stroke-width="1.2" fill="none" shape-rendering="auto"/>
<path d="M12 2 V6 H16 Z" fill="#10108A"/>
</svg>
<!-- find in files -->
<svg style="left:352px;top:57px" width="18" height="17" viewBox="0 0 18 17">
<path d="M1.5 1.5 H4.5 L5.5 2.5 H11.5 V9.5 H1.5 Z" fill="#E4F08C" stroke="#000"/>
<rect x="4" y="4" width="1" height="1" fill="#000"/><rect x="5" y="5" width="1" height="1" fill="#000"/><rect x="7" y="6" width="1" height="1" fill="#000"/>
<rect x="8" y="5" width="2" height="3" fill="#000"/><rect x="13" y="5" width="2" height="3" fill="#000"/>
<rect x="6" y="7" width="5" height="8" fill="#000"/><rect x="12" y="7" width="5" height="8" fill="#000"/>
<rect x="10" y="9" width="2" height="3" fill="#000"/>
<rect x="7" y="10" width="1" height="2" fill="#fff"/><rect x="7" y="12" width="1" height="2" fill="#fff"/>
<rect x="14" y="10" width="1" height="2" fill="#fff"/><rect x="14" y="12" width="1" height="2" fill="#fff"/>
<rect x="11" y="10" width="1" height="1" fill="#fff"/>
</svg>
<!-- find combo -->
<div class="a sunk" style="left:373px;top:54px;width:198px;height:23px"><div class="sunk2"></div>
<div class="cbtn" style="left:179px;top:1px;width:17px;height:19px"></div>
<svg style="left:184px;top:9px" width="7" height="4" fill="#000"><rect x="0" y="0" width="7" height="1"/><rect x="1" y="1" width="5" height="1"/><rect x="2" y="2" width="3" height="1"/><rect x="3" y="3" width="1" height="1"/></svg>
</div>
<!-- binoculars -->
<svg style="left:582px;top:57px" width="18" height="18" viewBox="0 0 18 18">
<path d="M3 1.5 Q5.5 1 5.5 3.5 Q5.5 6 3 5.5 Q1.5 5 2 3" fill="none" stroke="#D8D850" stroke-width="1.2" shape-rendering="auto"/>
<path d="M4 6.5 Q2 7 2.5 9 Q3 10.5 5 10" fill="none" stroke="#C8C890" stroke-width="1" shape-rendering="auto"/>
<rect x="8" y="8" width="2" height="3" fill="#000"/><rect x="13" y="8" width="2" height="3" fill="#000"/>
<rect x="6" y="10" width="5" height="7" fill="#000"/><rect x="12" y="10" width="5" height="7" fill="#000"/>
<rect x="10" y="11" width="2" height="3" fill="#000"/>
<rect x="7" y="12" width="1" height="2" fill="#fff"/><rect x="7" y="14" width="1" height="2" fill="#fff"/>
<rect x="14" y="12" width="1" height="2" fill="#fff"/><rect x="14" y="14" width="1" height="2" fill="#fff"/>
<rect x="11" y="12" width="1" height="1" fill="#fff"/>
</svg>
<div class="a hsep" style="left:0;top:80px;width:639px"></div>

<!-- ============ toolbar 2 y 82..109 ============ -->
<div class="a grip" style="left:0;top:83px;height:25px"></div>
<div class="a sunk" style="left:6px;top:85px;width:150px;height:23px"><div class="sunk2"></div>
<div class="ctxt" style="left:3px;top:3px;width:128px">(Globals)</div>
<div class="cbtn" style="left:131px;top:1px;width:17px;height:19px"></div>
<svg style="left:136px;top:9px" width="7" height="4" fill="#000"><rect x="0" y="0" width="7" height="1"/><rect x="1" y="1" width="5" height="1"/><rect x="2" y="2" width="3" height="1"/><rect x="3" y="3" width="1" height="1"/></svg>
</div>
<div class="a sunk" style="left:157px;top:85px;width:150px;height:23px"><div class="sunk2"></div>
<div class="ctxt" style="left:3px;top:3px;width:128px;letter-spacing:0.3px">(All global members</div>
<div class="cbtn" style="left:131px;top:1px;width:17px;height:19px"></div>
<svg style="left:136px;top:9px" width="7" height="4" fill="#000"><rect x="0" y="0" width="7" height="1"/><rect x="1" y="1" width="5" height="1"/><rect x="2" y="2" width="3" height="1"/><rect x="3" y="3" width="1" height="1"/></svg>
</div>
<div class="a sunk" style="left:308px;top:85px;width:249px;height:23px"><div class="sunk2"></div>
<div class="ctxt" style="left:3px;top:3px;width:226px;letter-spacing:0.28px">(No members - Create New Class...)</div>
<div class="cbtn" style="left:231px;top:1px;width:17px;height:19px"></div>
<svg style="left:236px;top:9px" width="7" height="4" fill="#000"><rect x="0" y="0" width="7" height="1"/><rect x="1" y="1" width="5" height="1"/><rect x="2" y="2" width="3" height="1"/><rect x="3" y="3" width="1" height="1"/></svg>
</div>
<!-- wand -->
<svg style="left:560px;top:86px" width="20" height="20" viewBox="0 0 20 20">
<g fill="#303030"><rect x="3" y="3" width="1" height="3"/><rect x="2" y="4" width="3" height="1"/>
<rect x="6" y="5" width="1" height="3"/><rect x="5" y="6" width="3" height="1"/>
<rect x="10" y="2" width="1" height="3"/><rect x="9" y="3" width="3" height="1"/>
<rect x="13" y="6" width="1" height="3"/><rect x="12" y="7" width="3" height="1"/>
<rect x="4" y="8" width="1" height="3"/><rect x="3" y="9" width="3" height="1"/></g>
<path d="M9.5 9.5 L17.5 16.5" stroke="#000" stroke-width="2.6" shape-rendering="auto"/>
<rect x="9" y="9" width="2" height="1" fill="#fff"/>
</svg>
<svg style="left:584px;top:94px" width="7" height="4" fill="#000"><rect x="0" y="0" width="7" height="1"/><rect x="1" y="1" width="5" height="1"/><rect x="2" y="2" width="3" height="1"/><rect x="3" y="3" width="1" height="1"/></svg>
<div class="a" style="left:597px;top:82px;width:1px;height:28px;background:#ACA899"></div>
<div class="a" style="left:598px;top:82px;width:1px;height:28px;background:#fff"></div>
<div class="a grip" style="left:600px;top:83px;height:25px;width:7px"></div>
<!-- icon compile -->
<svg style="left:610px;top:87px" width="17" height="17" viewBox="0 0 17 17" shape-rendering="auto">
<path d="M1 12 L6 15.5 L16 10" fill="none" stroke="#000" stroke-width="1.1"/>
<path d="M1 9.5 L6 13 L16 7.5" fill="none" stroke="#000" stroke-width="1.1"/>
<path d="M1 6.5 L10 1.5 L16 5 L6 10.5 Z" fill="#fff" stroke="#000" stroke-width="1.1"/>
<rect x="7" y="0" width="2" height="4" fill="#1A1A80"/>
<path d="M5 4 H11 L8 8 Z" fill="#1A1A80"/>
</svg>
<svg style="left:633px;top:88px" width="8" height="16" viewBox="0 0 8 16">
<rect x="2" y="1" width="1" height="1" fill="#000"/><rect x="4" y="3" width="1" height="1" fill="#000"/>
<rect x="0.5" y="5.5" width="8" height="9" fill="#fff" stroke="#000"/>
<rect x="2" y="10" width="1" height="1" fill="#404040"/><rect x="4" y="10" width="1" height="1" fill="#404040"/><rect x="2" y="12" width="1" height="1" fill="#404040"/><rect x="4" y="12" width="1" height="1" fill="#404040"/>
<path d="M3 4 L7 8 M7 5 V8 H4" stroke="#1A1A80" stroke-width="1.5" fill="none"/>
</svg>
<div class="a hsep" style="left:0;top:110px;width:639px"></div>

<!-- ============ left panel ============ -->
<div class="a" style="left:4px;top:118px;width:152px;height:3px;border-top:1px solid #fff;border-bottom:1px solid #ACA899"></div>
<div class="a" style="left:4px;top:122px;width:152px;height:3px;border-top:1px solid #fff;border-bottom:1px solid #ACA899"></div>
<div class="a btn3d" style="left:160px;top:115px;width:12px;height:12px"></div>
<svg style="left:163px;top:119px" width="7" height="4" fill="#ACA899"><rect x="0" y="3" width="7" height="1"/><rect x="1" y="2" width="5" height="1"/><rect x="2" y="1" width="3" height="1"/><rect x="3" y="0" width="1" height="1"/></svg>
<div class="a btn3d" style="left:174px;top:115px;width:13px;height:12px"></div>
<svg style="left:177px;top:118px" width="7" height="6" viewBox="0 0 7 6"><path d="M0.5 0.5 L6 5.5 M6 0.5 L0.5 5.5" stroke="#404040" stroke-width="1.3" shape-rendering="auto"/></svg>
<div class="a" style="left:4px;top:129px;width:188px;height:1px;background:#F8F7F0"></div>
<div class="a" style="left:4px;top:129px;width:1px;height:307px;background:#F8F7F0"></div>
<div class="a" style="left:192px;top:112px;width:1px;height:331px;background:#fff"></div>

<div class="a" style="left:6px;top:132px;width:180px;height:282px;background:#fff;border-top:1px solid #ACA899;border-left:1px solid #ACA899;border-right:1px solid #000;border-bottom:1px solid #000"></div>
<div class="a" style="left:7px;top:133px;width:178px;height:280px;border-top:1px solid #716F64;border-left:1px solid #716F64;border-right:1px solid #F1EFE2;border-bottom:1px solid #F1EFE2"></div>
<!-- tree item -->
<div class="a" style="left:16px;top:139px;width:9px;height:9px;border:1px solid #ACA899;background:#fff"></div>
<div class="a" style="left:18px;top:143px;width:5px;height:1px;background:#000"></div>
<div class="a" style="left:20px;top:141px;width:1px;height:5px;background:#000"></div>
<div class="a" style="left:26px;top:143px;width:8px;height:1px;background-image:linear-gradient(90deg,#808080 50%,transparent 50%);background-size:2px 1px"></div>
<svg style="left:33px;top:135px" width="16" height="15" viewBox="0 0 16 15">
<rect x="2.5" y="0.5" width="13" height="11" fill="#fff" stroke="#000"/>
<rect x="2" y="0" width="14" height="2" fill="#101040"/>
<rect x="9" y="3" width="1" height="3" fill="#000"/><rect x="11.5" y="3.5" width="2" height="2" fill="none" stroke="#000"/>
<rect x="9.5" y="7.5" width="2" height="2" fill="none" stroke="#000"/><rect x="13" y="7" width="1" height="3" fill="#000"/>
<rect x="0.5" y="3.5" width="7" height="8" fill="#F4F4DC" stroke="#B0B088"/>
<rect x="2.5" y="6.5" width="7" height="8" fill="#fff" stroke="#000"/>
<rect x="4" y="8" width="4" height="1" fill="#000"/><rect x="4" y="10" width="4" height="1" fill="#000"/><rect x="4" y="12" width="4" height="1" fill="#000"/>
</svg>
<div class="a" style="left:53px;top:136px;font:bold 13.7px/16px 'Liberation Sans',sans-serif;color:#000;white-space:pre">Client classes</div>

<!-- tabs -->
<div class="a" style="left:4px;top:409px;width:88px;height:4px;background:#ECE9D8"></div>
<div class="a" style="left:4px;top:413px;width:6px;height:1px;background:#000"></div>
<div class="a" style="left:10px;top:410px;width:83px;height:26px;background:#ECE9D8;border-left:1px solid #fff;border-right:1px solid #000;border-bottom:1px solid #000;border-radius:0 0 3px 3px;box-shadow:inset -1px -1px 0 #ACA899"></div>
<svg style="left:12px;top:419px" width="17" height="14" viewBox="0 0 17 14">
<rect x="0" y="0" width="6" height="6" fill="#0000A0"/>
<rect x="11" y="1" width="5" height="5" fill="#A020A0"/>
<rect x="11" y="8" width="5" height="5" fill="#30D0D0"/>
<path d="M6 3.5 H11 M8.5 3.5 V10.5 H11" stroke="#808080" fill="none"/>
<path d="M16.5 8 V13.5 H11" stroke="#000" fill="none"/>
</svg>
<div class="a" style="left:31px;top:418px;font:bold 13.5px/16px 'Liberation Sans',sans-serif;color:#000;white-space:pre">ClassV...</div>
<div class="a" style="left:93px;top:413px;width:83px;height:23px;background:#ECE9D8;border-left:1px solid #000;border-right:1px solid #000;border-bottom:1px solid #000;border-top:1px solid #000;border-radius:0 0 3px 3px;box-shadow:inset -1px -1px 0 #ACA899,inset 1px 1px 0 #fff"></div>
<svg style="left:99px;top:417px" width="12" height="16" viewBox="0 0 12 16">
<path d="M0.5 0.5 H8.5 L11.5 3.5 V15.5 H0.5 Z" fill="#fff" stroke="#000"/>
<rect x="2" y="4" width="7" height="1" fill="#000"/><rect x="2" y="6" width="7" height="1" fill="#000"/><rect x="2" y="8" width="7" height="1" fill="#000"/><rect x="2" y="10" width="7" height="1" fill="#000"/><rect x="2" y="12" width="7" height="1" fill="#000"/>
</svg>
<div class="a" style="left:115px;top:418px;font:bold 13.5px/16px 'Liberation Sans',sans-serif;color:#000;white-space:pre">FileView</div>

<!-- ============ editor ============ -->
<div class="a" style="left:197px;top:111px;width:442px;height:328px;background:#fff;border-top:1px solid #000;border-left:1px solid #000"></div>
<div class="a dither" style="left:198px;top:112px;width:20px;height:310px"></div>
<!-- code -->
<svg style="left:218px;top:127px" width="300" height="290" fill="#000"><rect x="25" y="36" width="7" height="1"/><rect x="66" y="36" width="5" height="1"/><rect x="35" y="36" width="3" height="1"/><rect x="57" y="36" width="6" height="1"/><rect x="74" y="34" width="2" height="4"/><rect x="2" y="34" width="2" height="4"/><rect x="6" y="34" width="2" height="4"/><rect x="78" y="34" width="2" height="4"/><rect x="41" y="36" width="2" height="2"/><rect x="9" y="36" width="2" height="2"/><rect x="37" y="37" width="2" height="1"/><rect x="34" y="37" width="2" height="1"/><rect x="42" y="38" width="2" height="1"/><rect x="38" y="38" width="2" height="1"/><rect x="10" y="38" width="2" height="1"/><rect x="57" y="37" width="2" height="3"/><rect x="62" y="37" width="2" height="3"/><rect x="65" y="37" width="2" height="3"/><rect x="25" y="37" width="2" height="3"/><rect x="70" y="37" width="2" height="3"/><rect x="22" y="38" width="2" height="2"/><rect x="17" y="38" width="2" height="2"/><rect x="49" y="38" width="2" height="2"/><rect x="54" y="38" width="2" height="2"/><rect x="37" y="39" width="3" height="1"/><rect x="33" y="38" width="2" height="3"/><rect x="11" y="39" width="2" height="2"/><rect x="43" y="39" width="2" height="2"/><rect x="36" y="40" width="4" height="1"/><rect x="50" y="40" width="2" height="1"/><rect x="66" y="40" width="5" height="1"/><rect x="18" y="40" width="2" height="1"/><rect x="25" y="40" width="6" height="1"/><rect x="53" y="40" width="2" height="1"/><rect x="57" y="40" width="6" height="1"/><rect x="21" y="40" width="2" height="1"/><rect x="33" y="41" width="4" height="1"/><rect x="51" y="41" width="3" height="2"/><rect x="44" y="41" width="2" height="2"/><rect x="19" y="41" width="3" height="2"/><rect x="12" y="41" width="2" height="2"/><rect x="33" y="42" width="3" height="1"/><rect x="38" y="41" width="2" height="3"/><rect x="50" y="43" width="2" height="1"/><rect x="18" y="43" width="2" height="1"/><rect x="33" y="43" width="2" height="1"/><rect x="53" y="43" width="2" height="1"/><rect x="45" y="43" width="2" height="1"/><rect x="13" y="43" width="2" height="1"/><rect x="21" y="43" width="2" height="1"/><rect x="57" y="41" width="2" height="4"/><rect x="30" y="41" width="2" height="4"/><rect x="62" y="41" width="2" height="4"/><rect x="65" y="41" width="2" height="4"/><rect x="70" y="41" width="2" height="4"/><rect x="37" y="44" width="2" height="1"/><rect x="34" y="44" width="2" height="1"/><rect x="25" y="44" width="2" height="1"/><rect x="22" y="44" width="2" height="2"/><rect x="17" y="44" width="2" height="2"/><rect x="14" y="44" width="2" height="2"/><rect x="49" y="44" width="2" height="2"/><rect x="46" y="44" width="2" height="2"/><rect x="54" y="44" width="2" height="2"/><rect x="66" y="45" width="5" height="1"/><rect x="35" y="45" width="3" height="1"/><rect x="57" y="45" width="6" height="1"/><rect x="26" y="45" width="5" height="1"/><rect x="68" y="67" width="3" height="1"/><rect x="90" y="68" width="5" height="1"/><rect x="25" y="68" width="7" height="1"/><rect x="129" y="68" width="7" height="1"/><rect x="98" y="68" width="5" height="1"/><rect x="121" y="68" width="7" height="1"/><rect x="2" y="66" width="2" height="4"/><rect x="6" y="66" width="2" height="4"/><rect x="138" y="66" width="2" height="4"/><rect x="142" y="66" width="2" height="4"/><rect x="57" y="67" width="2" height="3"/><rect x="73" y="68" width="2" height="2"/><rect x="41" y="68" width="2" height="2"/><rect x="105" y="68" width="2" height="2"/><rect x="9" y="68" width="2" height="2"/><rect x="67" y="68" width="2" height="3"/><rect x="30" y="69" width="2" height="2"/><rect x="134" y="69" width="2" height="2"/><rect x="126" y="69" width="2" height="2"/><rect x="97" y="69" width="2" height="2"/><rect x="106" y="70" width="2" height="1"/><rect x="57" y="70" width="6" height="1"/><rect x="74" y="70" width="2" height="1"/><rect x="10" y="70" width="2" height="1"/><rect x="42" y="70" width="2" height="1"/><rect x="34" y="70" width="5" height="1"/><rect x="102" y="69" width="2" height="3"/><rect x="94" y="69" width="2" height="3"/><rect x="89" y="69" width="2" height="3"/><rect x="81" y="70" width="2" height="2"/><rect x="118" y="70" width="2" height="2"/><rect x="22" y="70" width="2" height="2"/><rect x="86" y="70" width="2" height="2"/><rect x="113" y="70" width="2" height="2"/><rect x="17" y="70" width="2" height="2"/><rect x="49" y="70" width="2" height="2"/><rect x="54" y="70" width="2" height="2"/><rect x="57" y="71" width="3" height="1"/><rect x="38" y="71" width="2" height="1"/><rect x="65" y="71" width="6" height="1"/><rect x="43" y="71" width="2" height="2"/><rect x="107" y="71" width="2" height="2"/><rect x="75" y="71" width="2" height="2"/><rect x="11" y="71" width="2" height="2"/><rect x="82" y="72" width="2" height="1"/><rect x="50" y="72" width="2" height="1"/><rect x="99" y="72" width="4" height="1"/><rect x="18" y="72" width="2" height="1"/><rect x="90" y="72" width="6" height="1"/><rect x="117" y="72" width="2" height="1"/><rect x="85" y="72" width="2" height="1"/><rect x="53" y="72" width="2" height="1"/><rect x="21" y="72" width="2" height="1"/><rect x="114" y="72" width="2" height="1"/><rect x="133" y="71" width="2" height="3"/><rect x="125" y="71" width="2" height="3"/><rect x="29" y="71" width="2" height="3"/><rect x="51" y="73" width="3" height="2"/><rect x="44" y="73" width="2" height="2"/><rect x="76" y="73" width="2" height="2"/><rect x="115" y="73" width="3" height="2"/><rect x="19" y="73" width="3" height="2"/><rect x="83" y="73" width="3" height="2"/><rect x="108" y="73" width="2" height="2"/><rect x="12" y="73" width="2" height="2"/><rect x="57" y="72" width="2" height="4"/><rect x="94" y="73" width="2" height="3"/><rect x="82" y="75" width="2" height="1"/><rect x="50" y="75" width="2" height="1"/><rect x="18" y="75" width="2" height="1"/><rect x="117" y="75" width="2" height="1"/><rect x="85" y="75" width="2" height="1"/><rect x="53" y="75" width="2" height="1"/><rect x="21" y="75" width="2" height="1"/><rect x="77" y="75" width="2" height="1"/><rect x="114" y="75" width="2" height="1"/><rect x="45" y="75" width="2" height="1"/><rect x="109" y="75" width="2" height="1"/><rect x="13" y="75" width="2" height="1"/><rect x="33" y="71" width="2" height="6"/><rect x="62" y="71" width="2" height="6"/><rect x="102" y="73" width="2" height="4"/><rect x="97" y="75" width="2" height="2"/><rect x="57" y="76" width="3" height="1"/><rect x="93" y="76" width="2" height="1"/><rect x="38" y="76" width="2" height="1"/><rect x="67" y="72" width="2" height="6"/><rect x="124" y="74" width="2" height="4"/><rect x="132" y="74" width="2" height="4"/><rect x="28" y="74" width="2" height="4"/><rect x="14" y="76" width="2" height="2"/><rect x="78" y="76" width="2" height="2"/><rect x="46" y="76" width="2" height="2"/><rect x="81" y="76" width="2" height="2"/><rect x="118" y="76" width="2" height="2"/><rect x="22" y="76" width="2" height="2"/><rect x="86" y="76" width="2" height="2"/><rect x="113" y="76" width="2" height="2"/><rect x="17" y="76" width="2" height="2"/><rect x="49" y="76" width="2" height="2"/><rect x="54" y="76" width="2" height="2"/><rect x="110" y="76" width="2" height="2"/><rect x="90" y="77" width="4" height="1"/><rect x="57" y="77" width="6" height="1"/><rect x="98" y="77" width="5" height="1"/><rect x="34" y="77" width="5" height="1"/><rect x="25" y="100" width="7" height="1"/><rect x="57" y="100" width="5" height="1"/><rect x="67" y="100" width="3" height="1"/><rect x="33" y="100" width="7" height="1"/><rect x="74" y="98" width="2" height="4"/><rect x="2" y="98" width="2" height="4"/><rect x="6" y="98" width="2" height="4"/><rect x="78" y="98" width="2" height="4"/><rect x="41" y="100" width="2" height="2"/><rect x="9" y="100" width="2" height="2"/><rect x="66" y="101" width="2" height="1"/><rect x="69" y="101" width="2" height="1"/><rect x="61" y="101" width="2" height="1"/><rect x="42" y="102" width="2" height="1"/><rect x="70" y="102" width="2" height="1"/><rect x="10" y="102" width="2" height="1"/><rect x="33" y="101" width="2" height="3"/><rect x="25" y="101" width="2" height="3"/><rect x="22" y="102" width="2" height="2"/><rect x="17" y="102" width="2" height="2"/><rect x="49" y="102" width="2" height="2"/><rect x="54" y="102" width="2" height="2"/><rect x="83" y="102" width="3" height="2"/><rect x="69" y="103" width="3" height="1"/><rect x="65" y="102" width="2" height="3"/><rect x="11" y="103" width="2" height="2"/><rect x="43" y="103" width="2" height="2"/><rect x="50" y="104" width="2" height="1"/><rect x="33" y="104" width="6" height="1"/><rect x="18" y="104" width="2" height="1"/><rect x="25" y="104" width="6" height="1"/><rect x="53" y="104" width="2" height="1"/><rect x="68" y="104" width="4" height="1"/><rect x="21" y="104" width="2" height="1"/><rect x="65" y="105" width="4" height="1"/><rect x="51" y="105" width="3" height="2"/><rect x="44" y="105" width="2" height="2"/><rect x="19" y="105" width="3" height="2"/><rect x="12" y="105" width="2" height="2"/><rect x="65" y="106" width="3" height="1"/><rect x="62" y="102" width="2" height="6"/><rect x="70" y="105" width="2" height="3"/><rect x="50" y="107" width="2" height="1"/><rect x="18" y="107" width="2" height="1"/><rect x="53" y="107" width="2" height="1"/><rect x="65" y="107" width="2" height="1"/><rect x="45" y="107" width="2" height="1"/><rect x="83" y="107" width="3" height="1"/><rect x="13" y="107" width="2" height="1"/><rect x="21" y="107" width="2" height="1"/><rect x="57" y="101" width="2" height="8"/><rect x="66" y="108" width="2" height="1"/><rect x="69" y="108" width="2" height="1"/><rect x="61" y="108" width="2" height="1"/><rect x="33" y="105" width="2" height="5"/><rect x="25" y="105" width="2" height="5"/><rect x="22" y="108" width="2" height="2"/><rect x="17" y="108" width="2" height="2"/><rect x="14" y="108" width="2" height="2"/><rect x="49" y="108" width="2" height="2"/><rect x="46" y="108" width="2" height="2"/><rect x="54" y="108" width="2" height="2"/><rect x="84" y="108" width="2" height="2"/><rect x="57" y="109" width="5" height="1"/><rect x="67" y="109" width="3" height="1"/><rect x="83" y="110" width="2" height="1"/><rect x="37" y="163" width="2" height="1"/><rect x="266" y="163" width="2" height="1"/><rect x="155" y="163" width="3" height="1"/><rect x="181" y="163" width="2" height="1"/><rect x="234" y="163" width="2" height="1"/><rect x="82" y="164" width="5" height="1"/><rect x="202" y="164" width="5" height="1"/><rect x="259" y="164" width="3" height="1"/><rect x="30" y="163" width="2" height="3"/><rect x="110" y="163" width="2" height="3"/><rect x="230" y="163" width="2" height="3"/><rect x="267" y="164" width="2" height="2"/><rect x="180" y="164" width="2" height="2"/><rect x="36" y="164" width="2" height="2"/><rect x="235" y="164" width="2" height="2"/><rect x="258" y="165" width="2" height="1"/><rect x="261" y="165" width="2" height="1"/><rect x="139" y="164" width="2" height="3"/><rect x="187" y="164" width="2" height="3"/><rect x="67" y="164" width="2" height="3"/><rect x="86" y="165" width="2" height="2"/><rect x="206" y="165" width="2" height="2"/><rect x="226" y="166" width="6" height="1"/><rect x="217" y="166" width="6" height="1"/><rect x="74" y="166" width="5" height="1"/><rect x="10" y="166" width="5" height="1"/><rect x="262" y="166" width="2" height="1"/><rect x="194" y="166" width="5" height="1"/><rect x="42" y="166" width="5" height="1"/><rect x="26" y="166" width="6" height="1"/><rect x="145" y="166" width="6" height="1"/><rect x="162" y="166" width="5" height="1"/><rect x="17" y="166" width="6" height="1"/><rect x="2" y="166" width="5" height="1"/><rect x="130" y="166" width="5" height="1"/><rect x="169" y="166" width="6" height="1"/><rect x="90" y="166" width="5" height="1"/><rect x="97" y="166" width="6" height="1"/><rect x="106" y="166" width="6" height="1"/><rect x="210" y="166" width="5" height="1"/><rect x="201" y="165" width="2" height="3"/><rect x="81" y="165" width="2" height="3"/><rect x="275" y="166" width="3" height="2"/><rect x="185" y="167" width="6" height="1"/><rect x="29" y="167" width="3" height="1"/><rect x="46" y="167" width="2" height="1"/><rect x="217" y="167" width="3" height="1"/><rect x="6" y="167" width="2" height="1"/><rect x="145" y="167" width="3" height="1"/><rect x="134" y="167" width="2" height="1"/><rect x="169" y="167" width="3" height="1"/><rect x="17" y="167" width="3" height="1"/><rect x="261" y="167" width="3" height="1"/><rect x="109" y="167" width="3" height="1"/><rect x="137" y="167" width="6" height="1"/><rect x="229" y="167" width="3" height="1"/><rect x="97" y="167" width="3" height="1"/><rect x="65" y="167" width="6" height="1"/><rect x="257" y="166" width="2" height="3"/><rect x="41" y="167" width="2" height="2"/><rect x="14" y="167" width="2" height="2"/><rect x="129" y="167" width="2" height="2"/><rect x="161" y="167" width="2" height="2"/><rect x="9" y="167" width="2" height="2"/><rect x="1" y="167" width="2" height="2"/><rect x="166" y="167" width="2" height="2"/><rect x="89" y="167" width="2" height="2"/><rect x="94" y="167" width="2" height="2"/><rect x="214" y="167" width="2" height="2"/><rect x="209" y="167" width="2" height="2"/><rect x="150" y="167" width="2" height="2"/><rect x="260" y="168" width="4" height="1"/><rect x="82" y="168" width="3" height="1"/><rect x="202" y="168" width="3" height="1"/><rect x="209" y="169" width="7" height="1"/><rect x="42" y="169" width="3" height="1"/><rect x="84" y="169" width="3" height="1"/><rect x="2" y="169" width="3" height="1"/><rect x="130" y="169" width="3" height="1"/><rect x="204" y="169" width="3" height="1"/><rect x="257" y="169" width="4" height="1"/><rect x="9" y="169" width="7" height="1"/><rect x="161" y="169" width="7" height="1"/><rect x="89" y="169" width="7" height="1"/><rect x="44" y="170" width="3" height="1"/><rect x="132" y="170" width="3" height="1"/><rect x="257" y="170" width="3" height="1"/><rect x="4" y="170" width="3" height="1"/><rect x="179" y="166" width="2" height="6"/><rect x="268" y="166" width="2" height="6"/><rect x="236" y="166" width="2" height="6"/><rect x="35" y="166" width="2" height="6"/><rect x="230" y="168" width="2" height="4"/><rect x="30" y="168" width="2" height="4"/><rect x="110" y="168" width="2" height="4"/><rect x="262" y="169" width="2" height="3"/><rect x="257" y="171" width="2" height="1"/><rect x="275" y="171" width="3" height="1"/><rect x="156" y="164" width="2" height="9"/><rect x="73" y="167" width="2" height="6"/><rect x="193" y="167" width="2" height="6"/><rect x="105" y="167" width="2" height="6"/><rect x="78" y="167" width="2" height="6"/><rect x="225" y="167" width="2" height="6"/><rect x="198" y="167" width="2" height="6"/><rect x="25" y="167" width="2" height="6"/><rect x="139" y="168" width="2" height="5"/><rect x="67" y="168" width="2" height="5"/><rect x="187" y="168" width="2" height="5"/><rect x="9" y="170" width="2" height="3"/><rect x="161" y="170" width="2" height="3"/><rect x="89" y="170" width="2" height="3"/><rect x="209" y="170" width="2" height="3"/><rect x="86" y="170" width="2" height="3"/><rect x="206" y="170" width="2" height="3"/><rect x="201" y="171" width="2" height="2"/><rect x="46" y="171" width="2" height="2"/><rect x="6" y="171" width="2" height="2"/><rect x="134" y="171" width="2" height="2"/><rect x="81" y="171" width="2" height="2"/><rect x="41" y="172" width="2" height="1"/><rect x="14" y="172" width="2" height="1"/><rect x="29" y="172" width="3" height="1"/><rect x="129" y="172" width="2" height="1"/><rect x="1" y="172" width="2" height="1"/><rect x="166" y="172" width="2" height="1"/><rect x="258" y="172" width="2" height="1"/><rect x="94" y="172" width="2" height="1"/><rect x="109" y="172" width="3" height="1"/><rect x="214" y="172" width="2" height="1"/><rect x="243" y="172" width="3" height="1"/><rect x="229" y="172" width="3" height="1"/><rect x="51" y="172" width="3" height="1"/><rect x="115" y="172" width="3" height="1"/><rect x="261" y="172" width="2" height="1"/><rect x="102" y="167" width="2" height="7"/><rect x="222" y="167" width="2" height="7"/><rect x="22" y="167" width="2" height="7"/><rect x="174" y="167" width="2" height="7"/><rect x="97" y="168" width="2" height="6"/><rect x="217" y="168" width="2" height="6"/><rect x="145" y="168" width="2" height="6"/><rect x="169" y="168" width="2" height="6"/><rect x="17" y="168" width="2" height="6"/><rect x="235" y="172" width="2" height="2"/><rect x="276" y="172" width="2" height="2"/><rect x="267" y="172" width="2" height="2"/><rect x="180" y="172" width="2" height="2"/><rect x="36" y="172" width="2" height="2"/><rect x="226" y="173" width="6" height="1"/><rect x="82" y="173" width="5" height="1"/><rect x="202" y="173" width="5" height="1"/><rect x="74" y="173" width="5" height="1"/><rect x="140" y="173" width="3" height="1"/><rect x="259" y="173" width="3" height="1"/><rect x="10" y="173" width="5" height="1"/><rect x="194" y="173" width="5" height="1"/><rect x="42" y="173" width="5" height="1"/><rect x="26" y="173" width="6" height="1"/><rect x="154" y="173" width="6" height="1"/><rect x="162" y="173" width="5" height="1"/><rect x="2" y="173" width="5" height="1"/><rect x="130" y="173" width="5" height="1"/><rect x="68" y="173" width="3" height="1"/><rect x="90" y="173" width="5" height="1"/><rect x="188" y="173" width="3" height="1"/><rect x="106" y="173" width="6" height="1"/><rect x="210" y="173" width="5" height="1"/><rect x="244" y="173" width="2" height="2"/><rect x="52" y="173" width="2" height="2"/><rect x="116" y="173" width="2" height="2"/><rect x="37" y="174" width="2" height="1"/><rect x="266" y="174" width="2" height="1"/><rect x="275" y="174" width="2" height="1"/><rect x="181" y="174" width="2" height="1"/><rect x="234" y="174" width="2" height="1"/><rect x="115" y="175" width="2" height="1"/><rect x="243" y="175" width="2" height="1"/><rect x="51" y="175" width="2" height="1"/><rect x="27" y="211" width="3" height="1"/><rect x="122" y="211" width="2" height="1"/><rect x="109" y="211" width="2" height="1"/><rect x="123" y="212" width="2" height="2"/><rect x="108" y="212" width="2" height="2"/><rect x="99" y="212" width="2" height="3"/><rect x="18" y="214" width="5" height="1"/><rect x="66" y="214" width="5" height="1"/><rect x="50" y="214" width="5" height="1"/><rect x="34" y="214" width="5" height="1"/><rect x="85" y="214" width="2" height="1"/><rect x="42" y="214" width="5" height="1"/><rect x="114" y="214" width="5" height="1"/><rect x="58" y="214" width="5" height="1"/><rect x="74" y="214" width="5" height="1"/><rect x="90" y="214" width="5" height="1"/><rect x="81" y="211" width="2" height="5"/><rect x="131" y="214" width="3" height="2"/><rect x="3" y="214" width="3" height="2"/><rect x="11" y="214" width="3" height="2"/><rect x="78" y="215" width="2" height="1"/><rect x="46" y="215" width="2" height="1"/><rect x="84" y="215" width="2" height="1"/><rect x="62" y="215" width="2" height="1"/><rect x="118" y="215" width="2" height="1"/><rect x="22" y="215" width="2" height="1"/><rect x="97" y="215" width="6" height="1"/><rect x="41" y="215" width="2" height="2"/><rect x="89" y="215" width="2" height="2"/><rect x="57" y="215" width="2" height="2"/><rect x="94" y="215" width="2" height="2"/><rect x="113" y="215" width="2" height="2"/><rect x="49" y="215" width="2" height="2"/><rect x="54" y="215" width="2" height="2"/><rect x="81" y="216" width="4" height="1"/><rect x="42" y="217" width="3" height="1"/><rect x="114" y="217" width="3" height="1"/><rect x="81" y="217" width="3" height="1"/><rect x="89" y="217" width="7" height="1"/><rect x="58" y="217" width="3" height="1"/><rect x="49" y="217" width="7" height="1"/><rect x="60" y="218" width="3" height="1"/><rect x="81" y="218" width="4" height="1"/><rect x="116" y="218" width="3" height="1"/><rect x="44" y="218" width="3" height="1"/><rect x="124" y="214" width="2" height="6"/><rect x="107" y="214" width="2" height="6"/><rect x="131" y="219" width="3" height="1"/><rect x="84" y="219" width="2" height="1"/><rect x="28" y="212" width="2" height="9"/><rect x="73" y="215" width="2" height="6"/><rect x="65" y="215" width="2" height="6"/><rect x="33" y="215" width="2" height="6"/><rect x="38" y="215" width="2" height="6"/><rect x="70" y="215" width="2" height="6"/><rect x="17" y="215" width="2" height="6"/><rect x="99" y="216" width="2" height="5"/><rect x="49" y="218" width="2" height="3"/><rect x="89" y="218" width="2" height="3"/><rect x="46" y="219" width="2" height="2"/><rect x="11" y="219" width="3" height="2"/><rect x="3" y="219" width="3" height="2"/><rect x="62" y="219" width="2" height="2"/><rect x="118" y="219" width="2" height="2"/><rect x="41" y="220" width="2" height="1"/><rect x="78" y="220" width="2" height="1"/><rect x="57" y="220" width="2" height="1"/><rect x="85" y="220" width="2" height="1"/><rect x="94" y="220" width="2" height="1"/><rect x="22" y="220" width="2" height="1"/><rect x="113" y="220" width="2" height="1"/><rect x="54" y="220" width="2" height="1"/><rect x="81" y="219" width="2" height="3"/><rect x="108" y="220" width="2" height="2"/><rect x="123" y="220" width="2" height="2"/><rect x="132" y="220" width="2" height="2"/><rect x="18" y="221" width="5" height="1"/><rect x="66" y="221" width="5" height="1"/><rect x="50" y="221" width="5" height="1"/><rect x="86" y="221" width="2" height="1"/><rect x="34" y="221" width="5" height="1"/><rect x="100" y="221" width="3" height="1"/><rect x="42" y="221" width="5" height="1"/><rect x="114" y="221" width="5" height="1"/><rect x="26" y="221" width="6" height="1"/><rect x="74" y="221" width="5" height="1"/><rect x="58" y="221" width="5" height="1"/><rect x="90" y="221" width="5" height="1"/><rect x="131" y="222" width="2" height="1"/><rect x="122" y="222" width="2" height="1"/><rect x="109" y="222" width="2" height="1"/><rect x="59" y="244" width="3" height="1"/><rect x="61" y="245" width="2" height="1"/><rect x="58" y="245" width="2" height="1"/><rect x="62" y="246" width="2" height="1"/><rect x="67" y="246" width="3" height="2"/><rect x="61" y="247" width="3" height="1"/><rect x="57" y="246" width="2" height="3"/><rect x="60" y="248" width="4" height="1"/><rect x="57" y="249" width="4" height="1"/><rect x="57" y="250" width="3" height="1"/><rect x="62" y="249" width="2" height="3"/><rect x="57" y="251" width="2" height="1"/><rect x="67" y="251" width="3" height="1"/><rect x="61" y="252" width="2" height="1"/><rect x="58" y="252" width="2" height="1"/><rect x="68" y="252" width="2" height="2"/><rect x="59" y="253" width="3" height="1"/><rect x="67" y="254" width="2" height="1"/><rect x="2" y="275" width="3" height="1"/><rect x="4" y="276" width="2" height="2"/><rect x="3" y="278" width="2" height="2"/><rect x="4" y="280" width="2" height="1"/><rect x="5" y="281" width="2" height="1"/><rect x="4" y="282" width="2" height="1"/><rect x="3" y="283" width="2" height="2"/><rect x="4" y="285" width="2" height="2"/><rect x="2" y="287" width="3" height="1"/></svg>
<svg style="left:218px;top:127px" width="360" height="90" fill="#0A6A18"><rect x="6" y="4" width="2" height="2"/><rect x="14" y="4" width="2" height="2"/><rect x="186" y="6" width="5" height="1"/><rect x="217" y="6" width="7" height="1"/><rect x="5" y="6" width="2" height="1"/><rect x="154" y="6" width="5" height="1"/><rect x="13" y="6" width="2" height="1"/><rect x="158" y="7" width="2" height="1"/><rect x="4" y="7" width="2" height="2"/><rect x="12" y="7" width="2" height="2"/><rect x="11" y="9" width="2" height="2"/><rect x="3" y="9" width="2" height="2"/><rect x="2" y="11" width="2" height="1"/><rect x="10" y="11" width="2" height="1"/><rect x="185" y="7" width="2" height="6"/><rect x="190" y="7" width="2" height="6"/><rect x="153" y="7" width="2" height="6"/><rect x="158" y="12" width="2" height="1"/><rect x="220" y="7" width="2" height="7"/><rect x="223" y="7" width="2" height="7"/><rect x="217" y="7" width="2" height="7"/><rect x="9" y="12" width="2" height="2"/><rect x="1" y="12" width="2" height="2"/><rect x="186" y="13" width="5" height="1"/><rect x="154" y="13" width="5" height="1"/><rect x="308" y="67" width="3" height="1"/><rect x="314" y="68" width="5" height="1"/><rect x="267" y="68" width="3" height="1"/><rect x="186" y="68" width="5" height="1"/><rect x="322" y="68" width="5" height="1"/><rect x="289" y="68" width="7" height="1"/><rect x="337" y="68" width="7" height="1"/><rect x="281" y="68" width="7" height="1"/><rect x="297" y="67" width="2" height="3"/><rect x="182" y="68" width="2" height="2"/><rect x="174" y="68" width="2" height="2"/><rect x="269" y="69" width="2" height="1"/><rect x="266" y="69" width="2" height="1"/><rect x="211" y="68" width="2" height="3"/><rect x="307" y="68" width="2" height="3"/><rect x="321" y="69" width="2" height="2"/><rect x="294" y="69" width="2" height="2"/><rect x="342" y="69" width="2" height="2"/><rect x="190" y="69" width="2" height="2"/><rect x="286" y="69" width="2" height="2"/><rect x="202" y="70" width="5" height="1"/><rect x="330" y="70" width="5" height="1"/><rect x="181" y="70" width="2" height="1"/><rect x="225" y="70" width="7" height="1"/><rect x="297" y="70" width="6" height="1"/><rect x="218" y="70" width="5" height="1"/><rect x="173" y="70" width="2" height="1"/><rect x="270" y="70" width="2" height="1"/><rect x="326" y="69" width="2" height="3"/><rect x="185" y="69" width="2" height="3"/><rect x="313" y="69" width="2" height="3"/><rect x="318" y="69" width="2" height="3"/><rect x="273" y="70" width="2" height="2"/><rect x="278" y="70" width="2" height="2"/><rect x="305" y="71" width="6" height="1"/><rect x="209" y="71" width="6" height="1"/><rect x="269" y="71" width="3" height="1"/><rect x="297" y="71" width="3" height="1"/><rect x="206" y="71" width="2" height="1"/><rect x="334" y="71" width="2" height="1"/><rect x="265" y="70" width="2" height="3"/><rect x="201" y="71" width="2" height="2"/><rect x="180" y="71" width="2" height="2"/><rect x="222" y="71" width="2" height="2"/><rect x="217" y="71" width="2" height="2"/><rect x="172" y="71" width="2" height="2"/><rect x="314" y="72" width="6" height="1"/><rect x="186" y="72" width="3" height="1"/><rect x="277" y="72" width="2" height="1"/><rect x="268" y="72" width="4" height="1"/><rect x="323" y="72" width="4" height="1"/><rect x="274" y="72" width="2" height="1"/><rect x="285" y="71" width="2" height="3"/><rect x="341" y="71" width="2" height="3"/><rect x="293" y="71" width="2" height="3"/><rect x="265" y="73" width="4" height="1"/><rect x="202" y="73" width="3" height="1"/><rect x="188" y="73" width="3" height="1"/><rect x="217" y="73" width="7" height="1"/><rect x="193" y="70" width="2" height="5"/><rect x="198" y="70" width="2" height="5"/><rect x="179" y="73" width="2" height="2"/><rect x="171" y="73" width="2" height="2"/><rect x="275" y="73" width="3" height="2"/><rect x="204" y="74" width="3" height="1"/><rect x="265" y="74" width="3" height="1"/><rect x="297" y="72" width="2" height="4"/><rect x="318" y="73" width="2" height="3"/><rect x="270" y="73" width="2" height="3"/><rect x="170" y="75" width="2" height="1"/><rect x="194" y="75" width="2" height="1"/><rect x="277" y="75" width="2" height="1"/><rect x="197" y="75" width="3" height="1"/><rect x="265" y="75" width="2" height="1"/><rect x="178" y="75" width="2" height="1"/><rect x="274" y="75" width="2" height="1"/><rect x="302" y="71" width="2" height="6"/><rect x="329" y="71" width="2" height="6"/><rect x="211" y="72" width="2" height="5"/><rect x="326" y="73" width="2" height="4"/><rect x="190" y="74" width="2" height="3"/><rect x="217" y="74" width="2" height="3"/><rect x="321" y="75" width="2" height="2"/><rect x="185" y="75" width="2" height="2"/><rect x="206" y="75" width="2" height="2"/><rect x="201" y="76" width="2" height="1"/><rect x="266" y="76" width="2" height="1"/><rect x="317" y="76" width="2" height="1"/><rect x="222" y="76" width="2" height="1"/><rect x="297" y="76" width="3" height="1"/><rect x="195" y="76" width="5" height="1"/><rect x="269" y="76" width="2" height="1"/><rect x="334" y="76" width="2" height="1"/><rect x="225" y="71" width="2" height="7"/><rect x="231" y="71" width="2" height="7"/><rect x="228" y="71" width="2" height="7"/><rect x="307" y="72" width="2" height="6"/><rect x="284" y="74" width="2" height="4"/><rect x="340" y="74" width="2" height="4"/><rect x="292" y="74" width="2" height="4"/><rect x="273" y="76" width="2" height="2"/><rect x="278" y="76" width="2" height="2"/><rect x="177" y="76" width="2" height="2"/><rect x="169" y="76" width="2" height="2"/><rect x="267" y="77" width="3" height="1"/><rect x="202" y="77" width="5" height="1"/><rect x="330" y="77" width="5" height="1"/><rect x="322" y="77" width="5" height="1"/><rect x="297" y="77" width="6" height="1"/><rect x="218" y="77" width="5" height="1"/><rect x="186" y="77" width="5" height="1"/><rect x="314" y="77" width="4" height="1"/><rect x="212" y="77" width="3" height="1"/><rect x="198" y="77" width="2" height="2"/><rect x="194" y="79" width="5" height="1"/></svg>
<svg style="left:218px;top:127px" width="60" height="260" fill="#0A0A70"><rect x="19" y="244" width="2" height="3"/><rect x="10" y="246" width="5" height="1"/><rect x="33" y="246" width="6" height="1"/><rect x="1" y="246" width="6" height="1"/><rect x="41" y="246" width="6" height="1"/><rect x="17" y="247" width="6" height="1"/><rect x="33" y="247" width="3" height="1"/><rect x="1" y="247" width="3" height="1"/><rect x="41" y="247" width="3" height="1"/><rect x="6" y="247" width="2" height="2"/><rect x="14" y="247" width="2" height="2"/><rect x="38" y="247" width="2" height="2"/><rect x="9" y="247" width="2" height="2"/><rect x="9" y="249" width="7" height="1"/><rect x="30" y="246" width="2" height="6"/><rect x="25" y="246" width="2" height="7"/><rect x="19" y="248" width="2" height="5"/><rect x="9" y="250" width="2" height="3"/><rect x="14" y="252" width="2" height="1"/><rect x="29" y="252" width="3" height="1"/><rect x="46" y="247" width="2" height="7"/><rect x="1" y="248" width="2" height="6"/><rect x="41" y="248" width="2" height="6"/><rect x="33" y="248" width="2" height="6"/><rect x="10" y="253" width="5" height="1"/><rect x="20" y="253" width="3" height="1"/><rect x="26" y="253" width="6" height="1"/></svg>
<svg style="left:451px;top:191px" width="32" height="18" fill="#0A6A18"><rect x="2" y="2" width="1" height="1"/><rect x="9" y="2" width="1" height="1"/><rect x="17" y="2" width="1" height="1"/><rect x="24" y="2" width="1" height="1"/><rect x="2" y="3" width="1" height="1"/><rect x="9" y="3" width="1" height="1"/><rect x="17" y="3" width="1" height="1"/><rect x="24" y="3" width="1" height="1"/><rect x="2" y="4" width="1" height="1"/><rect x="6" y="4" width="1" height="1"/><rect x="9" y="4" width="1" height="1"/><rect x="12" y="4" width="1" height="1"/><rect x="17" y="4" width="1" height="1"/><rect x="24" y="4" width="1" height="1"/><rect x="2" y="5" width="1" height="1"/><rect x="6" y="5" width="1" height="1"/><rect x="9" y="5" width="5" height="1"/><rect x="17" y="5" width="1" height="1"/><rect x="24" y="5" width="1" height="1"/><rect x="0" y="6" width="5" height="1"/><rect x="6" y="6" width="4" height="1"/><rect x="12" y="6" width="1" height="1"/><rect x="17" y="6" width="1" height="1"/><rect x="21" y="6" width="1" height="1"/><rect x="24" y="6" width="1" height="1"/><rect x="2" y="7" width="1" height="1"/><rect x="5" y="7" width="2" height="1"/><rect x="9" y="7" width="1" height="1"/><rect x="12" y="7" width="1" height="1"/><rect x="15" y="7" width="5" height="1"/><rect x="21" y="7" width="1" height="1"/><rect x="24" y="7" width="4" height="1"/><rect x="2" y="8" width="1" height="1"/><rect x="6" y="8" width="1" height="1"/><rect x="9" y="8" width="1" height="1"/><rect x="12" y="8" width="1" height="1"/><rect x="17" y="8" width="1" height="1"/><rect x="21" y="8" width="1" height="1"/><rect x="24" y="8" width="1" height="1"/><rect x="2" y="9" width="1" height="1"/><rect x="6" y="9" width="1" height="1"/><rect x="9" y="9" width="1" height="1"/><rect x="12" y="9" width="1" height="1"/><rect x="17" y="9" width="1" height="1"/><rect x="21" y="9" width="1" height="1"/><rect x="24" y="9" width="1" height="1"/><rect x="2" y="10" width="1" height="1"/><rect x="6" y="10" width="1" height="1"/><rect x="9" y="10" width="2" height="1"/><rect x="12" y="10" width="1" height="1"/><rect x="17" y="10" width="1" height="1"/><rect x="21" y="10" width="1" height="1"/><rect x="24" y="10" width="1" height="1"/><rect x="2" y="11" width="1" height="1"/><rect x="6" y="11" width="1" height="1"/><rect x="9" y="11" width="1" height="1"/><rect x="11" y="11" width="1" height="1"/><rect x="17" y="11" width="1" height="1"/><rect x="21" y="11" width="1" height="1"/><rect x="24" y="11" width="1" height="1"/><rect x="2" y="12" width="1" height="1"/><rect x="4" y="12" width="1" height="1"/><rect x="6" y="12" width="1" height="1"/><rect x="9" y="12" width="1" height="1"/><rect x="17" y="12" width="3" height="1"/><rect x="21" y="12" width="1" height="1"/><rect x="24" y="12" width="1" height="1"/><rect x="2" y="13" width="2" height="1"/><rect x="6" y="13" width="1" height="1"/><rect x="13" y="13" width="1" height="1"/><rect x="15" y="13" width="2" height="1"/><rect x="21" y="13" width="1" height="1"/><rect x="24" y="13" width="1" height="1"/><rect x="0" y="14" width="2" height="1"/><rect x="6" y="14" width="1" height="1"/><rect x="13" y="14" width="1" height="1"/><rect x="21" y="14" width="1" height="1"/><rect x="24" y="14" width="1" height="1"/><rect x="7" y="15" width="7" height="1"/><rect x="19" y="15" width="10" height="1"/></svg>

<!-- h scrollbar -->
<div class="a dither" style="left:198px;top:422px;width:441px;height:17px"></div>
<div class="a" style="left:198px;top:422px;width:6px;height:16px;background:#ECE9D8;border-left:1px solid #fff;border-top:1px solid #fff"></div>
<div class="a" style="left:204px;top:422px;width:1px;height:17px;background:#000"></div>
<div class="a" style="left:197px;top:438px;width:8px;height:1px;background:#000"></div>
<div class="a btn3d" style="left:205px;top:422px;width:17px;height:17px"></div>
<svg style="left:210px;top:427px" width="4" height="7" fill="#000"><rect x="3" y="0" width="1" height="7"/><rect x="2" y="1" width="1" height="5"/><rect x="1" y="2" width="1" height="3"/><rect x="0" y="3" width="1" height="1"/></svg>
<div class="a btn3d" style="left:222px;top:422px;width:9px;height:17px"></div>

<!-- ============ output ============ -->
<div class="a" style="left:0;top:443px;width:639px;height:1px;background:#F8F7F0"></div>
<div class="a" style="left:0;top:444px;width:639px;height:1px;background:#808078"></div>
<div class="a" style="left:0;top:445px;width:639px;height:1px;background:#000"></div>
<div class="a" style="left:0;top:446px;width:639px;height:2px;background:#fff"></div>
<div class="a btn3d" style="left:1px;top:449px;width:12px;height:12px"></div>
<svg style="left:4px;top:452px" width="7" height="6" viewBox="0 0 7 6"><path d="M0.5 0.5 L6 5.5 M6 0.5 L0.5 5.5" stroke="#404040" stroke-width="1.3" shape-rendering="auto"/></svg>
<div class="a btn3d" style="left:1px;top:463px;width:12px;height:12px"></div>
<svg style="left:4px;top:465px" width="4" height="7" fill="#ACA899"><rect x="3" y="0" width="1" height="7"/><rect x="2" y="1" width="1" height="5"/><rect x="1" y="2" width="1" height="3"/><rect x="0" y="3" width="1" height="1"/></svg>
<div class="a" style="left:5px;top:477px;width:2px;height:66px;border-left:1px solid #fff;border-right:1px solid #ACA899"></div>
<div class="a" style="left:9px;top:477px;width:2px;height:66px;border-left:1px solid #fff;border-right:1px solid #ACA899"></div>

<div class="a" style="left:16px;top:449px;width:623px;height:94px;background:#fff;border-top:1px solid #ACA899;border-left:1px solid #ACA899"></div>
<div class="a" style="left:17px;top:450px;width:622px;height:93px;border-top:1px solid #000;border-left:1px solid #000"></div>
<svg style="left:20px;top:464px" width="300" height="18" fill="#000"><rect x="165" y="3" width="2" height="1"/><rect x="178" y="3" width="2" height="1"/><rect x="277" y="3" width="2" height="1"/><rect x="290" y="3" width="2" height="1"/><rect x="11" y="3" width="3" height="1"/><rect x="252" y="3" width="2" height="2"/><rect x="20" y="3" width="2" height="2"/><rect x="203" y="4" width="3" height="1"/><rect x="107" y="4" width="3" height="1"/><rect x="2" y="4" width="5" height="1"/><rect x="291" y="4" width="2" height="2"/><rect x="179" y="4" width="2" height="2"/><rect x="164" y="4" width="2" height="2"/><rect x="276" y="4" width="2" height="2"/><rect x="202" y="5" width="2" height="1"/><rect x="205" y="5" width="2" height="1"/><rect x="270" y="5" width="2" height="1"/><rect x="109" y="5" width="2" height="1"/><rect x="106" y="5" width="2" height="1"/><rect x="43" y="4" width="2" height="3"/><rect x="6" y="5" width="2" height="2"/><rect x="146" y="6" width="5" height="1"/><rect x="33" y="6" width="6" height="1"/><rect x="74" y="6" width="5" height="1"/><rect x="153" y="6" width="6" height="1"/><rect x="170" y="6" width="5" height="1"/><rect x="241" y="6" width="6" height="1"/><rect x="226" y="6" width="5" height="1"/><rect x="233" y="6" width="6" height="1"/><rect x="251" y="6" width="3" height="1"/><rect x="282" y="6" width="5" height="1"/><rect x="122" y="6" width="5" height="1"/><rect x="223" y="6" width="2" height="1"/><rect x="137" y="6" width="6" height="1"/><rect x="257" y="6" width="6" height="1"/><rect x="58" y="6" width="5" height="1"/><rect x="266" y="6" width="6" height="1"/><rect x="26" y="6" width="5" height="1"/><rect x="129" y="6" width="6" height="1"/><rect x="19" y="6" width="3" height="1"/><rect x="206" y="6" width="2" height="1"/><rect x="110" y="6" width="2" height="1"/><rect x="65" y="6" width="2" height="2"/><rect x="70" y="6" width="2" height="2"/><rect x="33" y="7" width="3" height="1"/><rect x="153" y="7" width="3" height="1"/><rect x="241" y="7" width="3" height="1"/><rect x="286" y="7" width="2" height="1"/><rect x="233" y="7" width="3" height="1"/><rect x="205" y="7" width="3" height="1"/><rect x="109" y="7" width="3" height="1"/><rect x="257" y="7" width="3" height="1"/><rect x="137" y="7" width="3" height="1"/><rect x="41" y="7" width="6" height="1"/><rect x="129" y="7" width="3" height="1"/><rect x="174" y="7" width="2" height="1"/><rect x="223" y="7" width="4" height="1"/><rect x="201" y="6" width="2" height="3"/><rect x="105" y="6" width="2" height="3"/><rect x="73" y="7" width="2" height="2"/><rect x="78" y="7" width="2" height="2"/><rect x="142" y="7" width="2" height="2"/><rect x="238" y="7" width="2" height="2"/><rect x="230" y="7" width="2" height="2"/><rect x="281" y="7" width="2" height="2"/><rect x="134" y="7" width="2" height="2"/><rect x="126" y="7" width="2" height="2"/><rect x="57" y="7" width="2" height="2"/><rect x="121" y="7" width="2" height="2"/><rect x="30" y="7" width="2" height="2"/><rect x="158" y="7" width="2" height="2"/><rect x="62" y="7" width="2" height="2"/><rect x="25" y="7" width="2" height="2"/><rect x="169" y="7" width="2" height="2"/><rect x="108" y="8" width="4" height="1"/><rect x="69" y="8" width="2" height="1"/><rect x="66" y="8" width="2" height="1"/><rect x="204" y="8" width="4" height="1"/><rect x="269" y="7" width="2" height="3"/><rect x="265" y="7" width="2" height="3"/><rect x="223" y="8" width="2" height="2"/><rect x="226" y="9" width="6" height="1"/><rect x="25" y="9" width="7" height="1"/><rect x="282" y="9" width="3" height="1"/><rect x="201" y="9" width="4" height="1"/><rect x="73" y="9" width="7" height="1"/><rect x="105" y="9" width="4" height="1"/><rect x="90" y="9" width="5" height="1"/><rect x="57" y="9" width="7" height="1"/><rect x="121" y="9" width="7" height="1"/><rect x="170" y="9" width="3" height="1"/><rect x="67" y="9" width="3" height="2"/><rect x="172" y="10" width="3" height="1"/><rect x="266" y="10" width="4" height="1"/><rect x="201" y="10" width="3" height="1"/><rect x="105" y="10" width="3" height="1"/><rect x="284" y="10" width="3" height="1"/><rect x="275" y="6" width="2" height="6"/><rect x="180" y="6" width="2" height="6"/><rect x="163" y="6" width="2" height="6"/><rect x="292" y="6" width="2" height="6"/><rect x="206" y="9" width="2" height="3"/><rect x="110" y="9" width="2" height="3"/><rect x="230" y="10" width="2" height="2"/><rect x="201" y="11" width="2" height="1"/><rect x="105" y="11" width="2" height="1"/><rect x="266" y="11" width="2" height="1"/><rect x="69" y="11" width="2" height="1"/><rect x="66" y="11" width="2" height="1"/><rect x="12" y="4" width="2" height="9"/><rect x="1" y="5" width="2" height="8"/><rect x="217" y="6" width="2" height="7"/><rect x="220" y="7" width="2" height="6"/><rect x="20" y="7" width="2" height="6"/><rect x="145" y="7" width="2" height="6"/><rect x="150" y="7" width="2" height="6"/><rect x="252" y="7" width="2" height="6"/><rect x="43" y="8" width="2" height="5"/><rect x="73" y="10" width="2" height="3"/><rect x="57" y="10" width="2" height="3"/><rect x="121" y="10" width="2" height="3"/><rect x="25" y="10" width="2" height="3"/><rect x="223" y="10" width="4" height="3"/><rect x="174" y="11" width="2" height="2"/><rect x="6" y="11" width="2" height="2"/><rect x="286" y="11" width="2" height="2"/><rect x="202" y="12" width="2" height="1"/><rect x="266" y="12" width="5" height="1"/><rect x="78" y="12" width="2" height="1"/><rect x="106" y="12" width="2" height="1"/><rect x="281" y="12" width="2" height="1"/><rect x="126" y="12" width="2" height="1"/><rect x="187" y="12" width="3" height="1"/><rect x="30" y="12" width="2" height="1"/><rect x="62" y="12" width="2" height="1"/><rect x="229" y="12" width="3" height="1"/><rect x="169" y="12" width="2" height="1"/><rect x="205" y="12" width="2" height="1"/><rect x="109" y="12" width="2" height="1"/><rect x="262" y="7" width="2" height="7"/><rect x="38" y="7" width="2" height="7"/><rect x="246" y="7" width="2" height="7"/><rect x="137" y="8" width="2" height="6"/><rect x="257" y="8" width="2" height="6"/><rect x="129" y="8" width="2" height="6"/><rect x="33" y="8" width="2" height="6"/><rect x="153" y="8" width="2" height="6"/><rect x="241" y="8" width="2" height="6"/><rect x="233" y="8" width="2" height="6"/><rect x="65" y="12" width="2" height="2"/><rect x="179" y="12" width="2" height="2"/><rect x="276" y="12" width="2" height="2"/><rect x="70" y="12" width="2" height="2"/><rect x="291" y="12" width="2" height="2"/><rect x="164" y="12" width="2" height="2"/><rect x="51" y="12" width="3" height="2"/><rect x="203" y="13" width="3" height="1"/><rect x="226" y="13" width="6" height="1"/><rect x="146" y="13" width="5" height="1"/><rect x="107" y="13" width="3" height="1"/><rect x="74" y="13" width="5" height="1"/><rect x="170" y="13" width="5" height="1"/><rect x="218" y="13" width="6" height="1"/><rect x="250" y="13" width="6" height="1"/><rect x="44" y="13" width="3" height="1"/><rect x="282" y="13" width="5" height="1"/><rect x="2" y="13" width="5" height="1"/><rect x="122" y="13" width="5" height="1"/><rect x="58" y="13" width="5" height="1"/><rect x="18" y="13" width="6" height="1"/><rect x="26" y="13" width="5" height="1"/><rect x="10" y="13" width="6" height="1"/><rect x="188" y="13" width="2" height="2"/><rect x="265" y="13" width="2" height="2"/><rect x="270" y="13" width="2" height="2"/><rect x="165" y="14" width="2" height="1"/><rect x="178" y="14" width="2" height="1"/><rect x="277" y="14" width="2" height="1"/><rect x="290" y="14" width="2" height="1"/><rect x="187" y="15" width="2" height="1"/><rect x="266" y="15" width="5" height="1"/></svg>

<!-- bottom tab strip -->
<div class="a" style="left:18px;top:523px;width:621px;height:15px;background:#ECE9D8"></div>
<div class="a dither" style="left:421px;top:523px;width:218px;height:16px"></div>
<div class="a btn3d" style="left:18px;top:523px;width:15px;height:15px"></div>
<svg style="left:23px;top:527px" width="4" height="7" fill="#ACA899"><rect x="3" y="0" width="1" height="7"/><rect x="2" y="1" width="1" height="5"/><rect x="1" y="2" width="1" height="3"/><rect x="0" y="3" width="1" height="1"/></svg>
<div class="a btn3d" style="left:33px;top:523px;width:16px;height:15px"></div>
<svg style="left:39px;top:527px" width="4" height="7" fill="#000"><rect x="0" y="0" width="1" height="7"/><rect x="1" y="1" width="1" height="5"/><rect x="2" y="2" width="1" height="3"/><rect x="3" y="3" width="1" height="1"/></svg>
<svg style="left:49px;top:523px" width="346" height="16" viewBox="0 0 346 16">
<path d="M0 0.5 H346" stroke="#000"/>
<path d="M1 0 L8 15 H48 L54 0 Z" fill="#fff" shape-rendering="auto"/>
<path d="M1 0 L8 15 H48 L54 0" fill="none" stroke="#000" shape-rendering="auto"/>
<path d="M93 0 L99 15" stroke="#000" shape-rendering="auto"/>
<path d="M207 0 L213 15" stroke="#000" shape-rendering="auto"/>
<path d="M321 0 L327 15" stroke="#000" shape-rendering="auto"/>
<path d="M0 15.5 H346" stroke="#000"/><path d="M345.5 0 V16" stroke="#000"/>
</svg>
<svg style="left:61px;top:522px" width="30" height="16" fill="#000"><rect x="2" y="2" width="2" height="1"/><rect x="22" y="2" width="2" height="1"/><rect x="2" y="3" width="2" height="1"/><rect x="6" y="3" width="7" height="1"/><rect x="14" y="3" width="13" height="1"/><rect x="1" y="4" width="2" height="1"/><rect x="6" y="4" width="2" height="1"/><rect x="11" y="4" width="2" height="1"/><rect x="17" y="4" width="2" height="1"/><rect x="22" y="4" width="2" height="1"/><rect x="25" y="4" width="2" height="1"/><rect x="1" y="5" width="4" height="1"/><rect x="6" y="5" width="2" height="1"/><rect x="11" y="5" width="2" height="1"/><rect x="16" y="5" width="12" height="1"/><rect x="0" y="6" width="4" height="1"/><rect x="6" y="6" width="7" height="1"/><rect x="15" y="6" width="2" height="1"/><rect x="22" y="6" width="2" height="1"/><rect x="25" y="6" width="2" height="1"/><rect x="2" y="7" width="2" height="1"/><rect x="6" y="7" width="2" height="1"/><rect x="11" y="7" width="2" height="1"/><rect x="15" y="7" width="12" height="1"/><rect x="1" y="8" width="4" height="1"/><rect x="6" y="8" width="2" height="1"/><rect x="11" y="8" width="2" height="1"/><rect x="17" y="8" width="2" height="1"/><rect x="22" y="8" width="2" height="1"/><rect x="0" y="9" width="4" height="1"/><rect x="6" y="9" width="7" height="1"/><rect x="14" y="9" width="2" height="1"/><rect x="17" y="9" width="10" height="1"/><rect x="6" y="10" width="2" height="1"/><rect x="11" y="10" width="2" height="1"/><rect x="15" y="10" width="4" height="1"/><rect x="22" y="10" width="2" height="1"/><rect x="6" y="11" width="2" height="1"/><rect x="11" y="11" width="2" height="1"/><rect x="16" y="11" width="12" height="1"/><rect x="2" y="12" width="3" height="1"/><rect x="6" y="12" width="2" height="1"/><rect x="11" y="12" width="2" height="1"/><rect x="16" y="12" width="2" height="1"/><rect x="22" y="12" width="2" height="1"/><rect x="0" y="13" width="3" height="1"/><rect x="6" y="13" width="2" height="1"/><rect x="11" y="13" width="2" height="1"/><rect x="15" y="13" width="5" height="1"/><rect x="22" y="13" width="2" height="1"/><rect x="5" y="14" width="11" height="1"/><rect x="19" y="14" width="9" height="1"/></svg>
<svg style="left:109px;top:522px" width="30" height="16" fill="#000"><rect x="1" y="2" width="1" height="1"/><rect x="15" y="2" width="1" height="1"/><rect x="23" y="2" width="1" height="1"/><rect x="25" y="2" width="1" height="1"/><rect x="2" y="3" width="1" height="1"/><rect x="5" y="3" width="8" height="1"/><rect x="16" y="3" width="1" height="1"/><rect x="23" y="3" width="1" height="1"/><rect x="26" y="3" width="1" height="1"/><rect x="2" y="4" width="1" height="1"/><rect x="5" y="4" width="1" height="1"/><rect x="8" y="4" width="1" height="1"/><rect x="12" y="4" width="1" height="1"/><rect x="16" y="4" width="1" height="1"/><rect x="18" y="4" width="9" height="1"/><rect x="5" y="5" width="1" height="1"/><rect x="7" y="5" width="4" height="1"/><rect x="12" y="5" width="1" height="1"/><rect x="23" y="5" width="1" height="1"/><rect x="0" y="6" width="3" height="1"/><rect x="5" y="6" width="1" height="1"/><rect x="8" y="6" width="1" height="1"/><rect x="12" y="6" width="1" height="1"/><rect x="14" y="6" width="3" height="1"/><rect x="23" y="6" width="1" height="1"/><rect x="2" y="7" width="1" height="1"/><rect x="5" y="7" width="8" height="1"/><rect x="16" y="7" width="1" height="1"/><rect x="18" y="7" width="4" height="1"/><rect x="23" y="7" width="1" height="1"/><rect x="2" y="8" width="1" height="1"/><rect x="5" y="8" width="1" height="1"/><rect x="12" y="8" width="1" height="1"/><rect x="16" y="8" width="1" height="1"/><rect x="20" y="8" width="1" height="1"/><rect x="23" y="8" width="1" height="1"/><rect x="2" y="9" width="1" height="1"/><rect x="5" y="9" width="1" height="1"/><rect x="7" y="9" width="4" height="1"/><rect x="12" y="9" width="1" height="1"/><rect x="16" y="9" width="1" height="1"/><rect x="20" y="9" width="1" height="1"/><rect x="23" y="9" width="1" height="1"/><rect x="2" y="10" width="1" height="1"/><rect x="4" y="10" width="2" height="1"/><rect x="7" y="10" width="1" height="1"/><rect x="10" y="10" width="1" height="1"/><rect x="12" y="10" width="1" height="1"/><rect x="16" y="10" width="1" height="1"/><rect x="20" y="10" width="1" height="1"/><rect x="23" y="10" width="1" height="1"/><rect x="2" y="11" width="2" height="1"/><rect x="5" y="11" width="1" height="1"/><rect x="7" y="11" width="4" height="1"/><rect x="12" y="11" width="1" height="1"/><rect x="16" y="11" width="1" height="1"/><rect x="18" y="11" width="1" height="1"/><rect x="20" y="11" width="1" height="1"/><rect x="24" y="11" width="1" height="1"/><rect x="26" y="11" width="1" height="1"/><rect x="2" y="12" width="1" height="1"/><rect x="5" y="12" width="1" height="1"/><rect x="12" y="12" width="1" height="1"/><rect x="16" y="12" width="2" height="1"/><rect x="20" y="12" width="2" height="1"/><rect x="24" y="12" width="1" height="1"/><rect x="26" y="12" width="1" height="1"/><rect x="4" y="13" width="1" height="1"/><rect x="10" y="13" width="1" height="1"/><rect x="12" y="13" width="1" height="1"/><rect x="16" y="13" width="1" height="1"/><rect x="18" y="13" width="2" height="1"/><rect x="25" y="13" width="2" height="1"/><rect x="3" y="14" width="1" height="1"/><rect x="11" y="14" width="1" height="1"/><rect x="26" y="14" width="1" height="1"/></svg>
<svg style="left:158px;top:522px" width="94" height="16" fill="#000"><rect x="56" y="1" width="1" height="1"/><rect x="4" y="2" width="1" height="1"/><rect x="19" y="2" width="1" height="1"/><rect x="31" y="2" width="1" height="1"/><rect x="36" y="2" width="1" height="1"/><rect x="56" y="2" width="1" height="1"/><rect x="70" y="2" width="1" height="1"/><rect x="80" y="2" width="1" height="1"/><rect x="86" y="2" width="1" height="1"/><rect x="88" y="2" width="1" height="1"/><rect x="4" y="3" width="1" height="1"/><rect x="20" y="3" width="1" height="1"/><rect x="31" y="3" width="1" height="1"/><rect x="33" y="3" width="1" height="1"/><rect x="36" y="3" width="1" height="1"/><rect x="56" y="3" width="1" height="1"/><rect x="70" y="3" width="1" height="1"/><rect x="80" y="3" width="1" height="1"/><rect x="86" y="3" width="1" height="1"/><rect x="89" y="3" width="1" height="1"/><rect x="0" y="4" width="13" height="1"/><rect x="14" y="4" width="13" height="1"/><rect x="30" y="4" width="1" height="1"/><rect x="33" y="4" width="1" height="1"/><rect x="36" y="4" width="1" height="1"/><rect x="51" y="4" width="11" height="1"/><rect x="64" y="4" width="13" height="1"/><rect x="78" y="4" width="5" height="1"/><rect x="86" y="4" width="1" height="1"/><rect x="3" y="5" width="1" height="1"/><rect x="17" y="5" width="1" height="1"/><rect x="23" y="5" width="1" height="1"/><rect x="30" y="5" width="1" height="1"/><rect x="33" y="5" width="7" height="1"/><rect x="42" y="5" width="3" height="1"/><rect x="51" y="5" width="1" height="1"/><rect x="56" y="5" width="1" height="1"/><rect x="61" y="5" width="1" height="1"/><rect x="68" y="5" width="1" height="1"/><rect x="70" y="5" width="1" height="1"/><rect x="72" y="5" width="1" height="1"/><rect x="80" y="5" width="1" height="1"/><rect x="86" y="5" width="5" height="1"/><rect x="3" y="6" width="1" height="1"/><rect x="8" y="6" width="1" height="1"/><rect x="17" y="6" width="1" height="1"/><rect x="23" y="6" width="1" height="1"/><rect x="29" y="6" width="2" height="1"/><rect x="32" y="6" width="1" height="1"/><rect x="36" y="6" width="1" height="1"/><rect x="44" y="6" width="1" height="1"/><rect x="51" y="6" width="1" height="1"/><rect x="56" y="6" width="1" height="1"/><rect x="61" y="6" width="1" height="1"/><rect x="67" y="6" width="1" height="1"/><rect x="70" y="6" width="1" height="1"/><rect x="73" y="6" width="1" height="1"/><rect x="80" y="6" width="1" height="1"/><rect x="83" y="6" width="4" height="1"/><rect x="2" y="7" width="1" height="1"/><rect x="8" y="7" width="1" height="1"/><rect x="18" y="7" width="1" height="1"/><rect x="22" y="7" width="1" height="1"/><rect x="28" y="7" width="1" height="1"/><rect x="30" y="7" width="2" height="1"/><rect x="36" y="7" width="1" height="1"/><rect x="44" y="7" width="1" height="1"/><rect x="51" y="7" width="1" height="1"/><rect x="56" y="7" width="1" height="1"/><rect x="61" y="7" width="1" height="1"/><rect x="66" y="7" width="1" height="1"/><rect x="70" y="7" width="1" height="1"/><rect x="74" y="7" width="1" height="1"/><rect x="80" y="7" width="1" height="1"/><rect x="82" y="7" width="1" height="1"/><rect x="86" y="7" width="1" height="1"/><rect x="89" y="7" width="1" height="1"/><rect x="1" y="8" width="2" height="1"/><rect x="8" y="8" width="1" height="1"/><rect x="18" y="8" width="1" height="1"/><rect x="22" y="8" width="1" height="1"/><rect x="30" y="8" width="1" height="1"/><rect x="36" y="8" width="1" height="1"/><rect x="44" y="8" width="1" height="1"/><rect x="51" y="8" width="11" height="1"/><rect x="64" y="8" width="2" height="1"/><rect x="67" y="8" width="7" height="1"/><rect x="75" y="8" width="2" height="1"/><rect x="80" y="8" width="2" height="1"/><rect x="86" y="8" width="1" height="1"/><rect x="89" y="8" width="1" height="1"/><rect x="0" y="9" width="1" height="1"/><rect x="2" y="9" width="1" height="1"/><rect x="5" y="9" width="7" height="1"/><rect x="19" y="9" width="1" height="1"/><rect x="21" y="9" width="1" height="1"/><rect x="30" y="9" width="1" height="1"/><rect x="32" y="9" width="9" height="1"/><rect x="44" y="9" width="1" height="1"/><rect x="51" y="9" width="1" height="1"/><rect x="56" y="9" width="1" height="1"/><rect x="61" y="9" width="1" height="1"/><rect x="67" y="9" width="1" height="1"/><rect x="73" y="9" width="1" height="1"/><rect x="78" y="9" width="3" height="1"/><rect x="86" y="9" width="1" height="1"/><rect x="88" y="9" width="1" height="1"/><rect x="2" y="10" width="1" height="1"/><rect x="8" y="10" width="1" height="1"/><rect x="20" y="10" width="1" height="1"/><rect x="30" y="10" width="1" height="1"/><rect x="36" y="10" width="1" height="1"/><rect x="44" y="10" width="1" height="1"/><rect x="56" y="10" width="1" height="1"/><rect x="67" y="10" width="7" height="1"/><rect x="80" y="10" width="1" height="1"/><rect x="87" y="10" width="1" height="1"/><rect x="2" y="11" width="1" height="1"/><rect x="8" y="11" width="1" height="1"/><rect x="19" y="11" width="1" height="1"/><rect x="21" y="11" width="1" height="1"/><rect x="30" y="11" width="1" height="1"/><rect x="36" y="11" width="1" height="1"/><rect x="44" y="11" width="1" height="1"/><rect x="56" y="11" width="1" height="1"/><rect x="67" y="11" width="1" height="1"/><rect x="73" y="11" width="1" height="1"/><rect x="80" y="11" width="1" height="1"/><rect x="86" y="11" width="2" height="1"/><rect x="2" y="12" width="1" height="1"/><rect x="8" y="12" width="1" height="1"/><rect x="18" y="12" width="1" height="1"/><rect x="22" y="12" width="1" height="1"/><rect x="30" y="12" width="1" height="1"/><rect x="36" y="12" width="1" height="1"/><rect x="44" y="12" width="1" height="1"/><rect x="56" y="12" width="1" height="1"/><rect x="67" y="12" width="7" height="1"/><rect x="80" y="12" width="1" height="1"/><rect x="85" y="12" width="1" height="1"/><rect x="88" y="12" width="1" height="1"/><rect x="90" y="12" width="1" height="1"/><rect x="2" y="13" width="1" height="1"/><rect x="8" y="13" width="1" height="1"/><rect x="17" y="13" width="1" height="1"/><rect x="23" y="13" width="1" height="1"/><rect x="30" y="13" width="1" height="1"/><rect x="36" y="13" width="1" height="1"/><rect x="42" y="13" width="5" height="1"/><rect x="56" y="13" width="1" height="1"/><rect x="78" y="13" width="1" height="1"/><rect x="80" y="13" width="1" height="1"/><rect x="84" y="13" width="1" height="1"/><rect x="89" y="13" width="2" height="1"/><rect x="2" y="14" width="1" height="1"/><rect x="4" y="14" width="9" height="1"/><rect x="14" y="14" width="3" height="1"/><rect x="24" y="14" width="3" height="1"/><rect x="30" y="14" width="1" height="1"/><rect x="36" y="14" width="1" height="1"/><rect x="56" y="14" width="1" height="1"/><rect x="64" y="14" width="13" height="1"/><rect x="79" y="14" width="1" height="1"/><rect x="82" y="14" width="2" height="1"/><rect x="90" y="14" width="1" height="1"/></svg>
<svg style="left:272px;top:522px" width="94" height="16" fill="#000"><rect x="56" y="1" width="1" height="1"/><rect x="4" y="2" width="1" height="1"/><rect x="19" y="2" width="1" height="1"/><rect x="31" y="2" width="1" height="1"/><rect x="36" y="2" width="1" height="1"/><rect x="56" y="2" width="1" height="1"/><rect x="70" y="2" width="1" height="1"/><rect x="80" y="2" width="1" height="1"/><rect x="86" y="2" width="1" height="1"/><rect x="88" y="2" width="1" height="1"/><rect x="4" y="3" width="1" height="1"/><rect x="20" y="3" width="1" height="1"/><rect x="31" y="3" width="1" height="1"/><rect x="33" y="3" width="1" height="1"/><rect x="36" y="3" width="1" height="1"/><rect x="56" y="3" width="1" height="1"/><rect x="70" y="3" width="1" height="1"/><rect x="80" y="3" width="1" height="1"/><rect x="86" y="3" width="1" height="1"/><rect x="89" y="3" width="1" height="1"/><rect x="0" y="4" width="13" height="1"/><rect x="14" y="4" width="13" height="1"/><rect x="30" y="4" width="1" height="1"/><rect x="33" y="4" width="1" height="1"/><rect x="36" y="4" width="1" height="1"/><rect x="51" y="4" width="11" height="1"/><rect x="64" y="4" width="13" height="1"/><rect x="78" y="4" width="5" height="1"/><rect x="86" y="4" width="1" height="1"/><rect x="3" y="5" width="1" height="1"/><rect x="17" y="5" width="1" height="1"/><rect x="23" y="5" width="1" height="1"/><rect x="30" y="5" width="1" height="1"/><rect x="33" y="5" width="7" height="1"/><rect x="43" y="5" width="4" height="1"/><rect x="51" y="5" width="1" height="1"/><rect x="56" y="5" width="1" height="1"/><rect x="61" y="5" width="1" height="1"/><rect x="68" y="5" width="1" height="1"/><rect x="70" y="5" width="1" height="1"/><rect x="72" y="5" width="1" height="1"/><rect x="80" y="5" width="1" height="1"/><rect x="86" y="5" width="5" height="1"/><rect x="3" y="6" width="1" height="1"/><rect x="8" y="6" width="1" height="1"/><rect x="17" y="6" width="1" height="1"/><rect x="23" y="6" width="1" height="1"/><rect x="29" y="6" width="2" height="1"/><rect x="32" y="6" width="1" height="1"/><rect x="36" y="6" width="1" height="1"/><rect x="42" y="6" width="1" height="1"/><rect x="47" y="6" width="1" height="1"/><rect x="51" y="6" width="1" height="1"/><rect x="56" y="6" width="1" height="1"/><rect x="61" y="6" width="1" height="1"/><rect x="67" y="6" width="1" height="1"/><rect x="70" y="6" width="1" height="1"/><rect x="73" y="6" width="1" height="1"/><rect x="80" y="6" width="1" height="1"/><rect x="83" y="6" width="4" height="1"/><rect x="2" y="7" width="1" height="1"/><rect x="8" y="7" width="1" height="1"/><rect x="18" y="7" width="1" height="1"/><rect x="22" y="7" width="1" height="1"/><rect x="28" y="7" width="1" height="1"/><rect x="30" y="7" width="2" height="1"/><rect x="36" y="7" width="1" height="1"/><rect x="42" y="7" width="1" height="1"/><rect x="47" y="7" width="1" height="1"/><rect x="51" y="7" width="1" height="1"/><rect x="56" y="7" width="1" height="1"/><rect x="61" y="7" width="1" height="1"/><rect x="66" y="7" width="1" height="1"/><rect x="70" y="7" width="1" height="1"/><rect x="74" y="7" width="1" height="1"/><rect x="80" y="7" width="1" height="1"/><rect x="82" y="7" width="1" height="1"/><rect x="86" y="7" width="1" height="1"/><rect x="89" y="7" width="1" height="1"/><rect x="1" y="8" width="2" height="1"/><rect x="8" y="8" width="1" height="1"/><rect x="18" y="8" width="1" height="1"/><rect x="22" y="8" width="1" height="1"/><rect x="30" y="8" width="1" height="1"/><rect x="36" y="8" width="1" height="1"/><rect x="46" y="8" width="1" height="1"/><rect x="51" y="8" width="11" height="1"/><rect x="64" y="8" width="2" height="1"/><rect x="67" y="8" width="7" height="1"/><rect x="75" y="8" width="2" height="1"/><rect x="80" y="8" width="2" height="1"/><rect x="86" y="8" width="1" height="1"/><rect x="89" y="8" width="1" height="1"/><rect x="0" y="9" width="1" height="1"/><rect x="2" y="9" width="1" height="1"/><rect x="5" y="9" width="7" height="1"/><rect x="19" y="9" width="1" height="1"/><rect x="21" y="9" width="1" height="1"/><rect x="30" y="9" width="1" height="1"/><rect x="32" y="9" width="9" height="1"/><rect x="45" y="9" width="1" height="1"/><rect x="51" y="9" width="1" height="1"/><rect x="56" y="9" width="1" height="1"/><rect x="61" y="9" width="1" height="1"/><rect x="67" y="9" width="1" height="1"/><rect x="73" y="9" width="1" height="1"/><rect x="78" y="9" width="3" height="1"/><rect x="86" y="9" width="1" height="1"/><rect x="88" y="9" width="1" height="1"/><rect x="2" y="10" width="1" height="1"/><rect x="8" y="10" width="1" height="1"/><rect x="20" y="10" width="1" height="1"/><rect x="30" y="10" width="1" height="1"/><rect x="36" y="10" width="1" height="1"/><rect x="44" y="10" width="1" height="1"/><rect x="56" y="10" width="1" height="1"/><rect x="67" y="10" width="7" height="1"/><rect x="80" y="10" width="1" height="1"/><rect x="87" y="10" width="1" height="1"/><rect x="2" y="11" width="1" height="1"/><rect x="8" y="11" width="1" height="1"/><rect x="19" y="11" width="1" height="1"/><rect x="21" y="11" width="1" height="1"/><rect x="30" y="11" width="1" height="1"/><rect x="36" y="11" width="1" height="1"/><rect x="43" y="11" width="1" height="1"/><rect x="56" y="11" width="1" height="1"/><rect x="67" y="11" width="1" height="1"/><rect x="73" y="11" width="1" height="1"/><rect x="80" y="11" width="1" height="1"/><rect x="86" y="11" width="2" height="1"/><rect x="2" y="12" width="1" height="1"/><rect x="8" y="12" width="1" height="1"/><rect x="18" y="12" width="1" height="1"/><rect x="22" y="12" width="1" height="1"/><rect x="30" y="12" width="1" height="1"/><rect x="36" y="12" width="1" height="1"/><rect x="42" y="12" width="1" height="1"/><rect x="56" y="12" width="1" height="1"/><rect x="67" y="12" width="7" height="1"/><rect x="80" y="12" width="1" height="1"/><rect x="85" y="12" width="1" height="1"/><rect x="88" y="12" width="1" height="1"/><rect x="90" y="12" width="1" height="1"/><rect x="2" y="13" width="1" height="1"/><rect x="8" y="13" width="1" height="1"/><rect x="17" y="13" width="1" height="1"/><rect x="23" y="13" width="1" height="1"/><rect x="30" y="13" width="1" height="1"/><rect x="36" y="13" width="1" height="1"/><rect x="42" y="13" width="6" height="1"/><rect x="56" y="13" width="1" height="1"/><rect x="78" y="13" width="1" height="1"/><rect x="80" y="13" width="1" height="1"/><rect x="84" y="13" width="1" height="1"/><rect x="89" y="13" width="2" height="1"/><rect x="2" y="14" width="1" height="1"/><rect x="4" y="14" width="9" height="1"/><rect x="14" y="14" width="3" height="1"/><rect x="24" y="14" width="3" height="1"/><rect x="30" y="14" width="1" height="1"/><rect x="36" y="14" width="1" height="1"/><rect x="56" y="14" width="1" height="1"/><rect x="64" y="14" width="13" height="1"/><rect x="79" y="14" width="1" height="1"/><rect x="82" y="14" width="2" height="1"/><rect x="90" y="14" width="1" height="1"/></svg>
<svg style="left:382px;top:522px" width="12" height="16" fill="#000"><rect x="2" y="2" width="1" height="1"/><rect x="2" y="3" width="1" height="1"/><rect x="6" y="3" width="6" height="1"/><rect x="1" y="4" width="1" height="1"/><rect x="6" y="4" width="1" height="1"/><rect x="11" y="4" width="1" height="1"/><rect x="1" y="5" width="1" height="1"/><rect x="3" y="5" width="1" height="1"/><rect x="6" y="5" width="1" height="1"/><rect x="11" y="5" width="1" height="1"/><rect x="0" y="6" width="3" height="1"/><rect x="6" y="6" width="6" height="1"/><rect x="2" y="7" width="1" height="1"/><rect x="6" y="7" width="1" height="1"/><rect x="11" y="7" width="1" height="1"/><rect x="1" y="8" width="1" height="1"/><rect x="3" y="8" width="1" height="1"/><rect x="6" y="8" width="1" height="1"/><rect x="11" y="8" width="1" height="1"/><rect x="0" y="9" width="3" height="1"/><rect x="6" y="9" width="6" height="1"/><rect x="6" y="10" width="1" height="1"/><rect x="11" y="10" width="1" height="1"/><rect x="6" y="11" width="1" height="1"/><rect x="11" y="11" width="1" height="1"/><rect x="2" y="12" width="2" height="1"/><rect x="6" y="12" width="1" height="1"/><rect x="11" y="12" width="1" height="1"/><rect x="0" y="13" width="2" height="1"/><rect x="6" y="13" width="1" height="1"/><rect x="11" y="13" width="1" height="1"/><rect x="5" y="14" width="7" height="1"/></svg>
<div class="a btn3d" style="left:395px;top:523px;width:17px;height:16px"></div>
<svg style="left:401px;top:527px" width="4" height="7" fill="#000"><rect x="3" y="0" width="1" height="7"/><rect x="2" y="1" width="1" height="5"/><rect x="1" y="2" width="1" height="3"/><rect x="0" y="3" width="1" height="1"/></svg>
<div class="a btn3d" style="left:412px;top:523px;width:9px;height:16px"></div>
<div class="a" style="left:18px;top:538px;width:377px;height:1px;background:#000"></div>
</body></html>
